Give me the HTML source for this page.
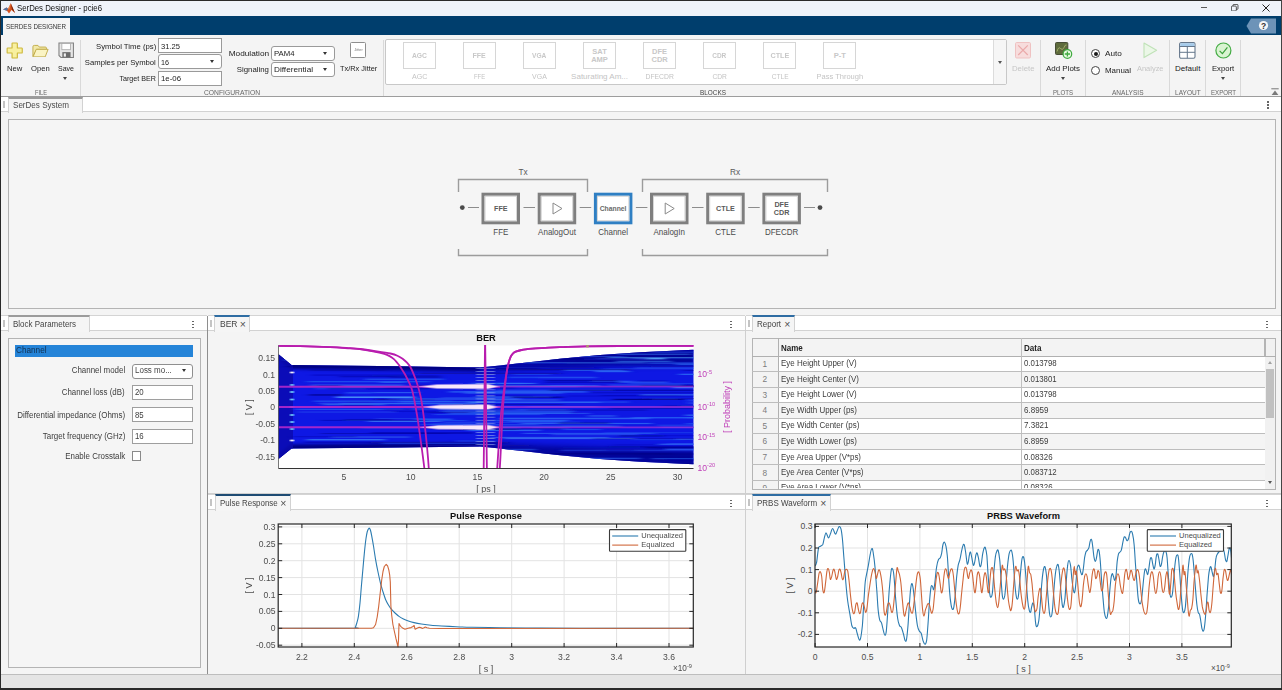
<!DOCTYPE html>
<html><head><meta charset="utf-8"><title>SerDes Designer - pcie6</title>
<style>
*{box-sizing:border-box;margin:0;padding:0}
html,body{width:1282px;height:690px;overflow:hidden;background:#f4f4f4;font-family:"Liberation Sans",sans-serif;font-size:8px;color:#222}
.abs{position:absolute}
#win{position:absolute;left:0;top:0;width:1282px;height:690px;background:#f4f4f4;overflow:hidden}
.t{position:absolute;white-space:nowrap;line-height:1}
.inp{position:absolute;background:#fff;border:1px solid #9a9a9a}
.dd{border-radius:3px}
.sep{position:absolute;width:1px;background:#d9d9d9}
.gb{position:absolute;width:33px;height:26.5px;border:1px solid #d6d6d6;background:#fff}
.dots{position:absolute;width:2px;height:2px;background:#555;box-shadow:0 3px 0 #555,0 6px 0 #555}
</style></head><body><div id="win">
<div class="abs" style="left:0;top:0;width:1282px;height:16px;background:#eff3fa"></div>
<svg class="abs" style="left:3px;top:2.5px" width="12" height="11" viewBox="0 0 24 22"><path d="M0 13 L7 9 L10 11.5 L15.5 0.5 L24 20 L17 14 L12 21 L8 15.5 Z" fill="#d6501c"/><path d="M0 13 L7 9 L10 11.5 L8 15.5 Z" fill="#4f74a8"/><path d="M15.5 0.5 L24 20 L18 13 Z" fill="#7e2408"/><path d="M10 11.5 L15.5 0.5 L14 9 L12 14 Z" fill="#f0a060" opacity="0.6"/></svg>
<div class="t" style="left:16.5px;top:4.1px;font-size:9px;color:#111;transform:scaleX(0.867);transform-origin:0 0;">SerDes Designer - pcie6</div>
<div class="abs" style="left:1200.7px;top:6.8px;width:6.8px;height:1.4px;background:#5a5a5a"></div>
<svg class="abs" style="left:1231.3px;top:4px" width="7.4" height="7.4" viewBox="0 0 9 9"><rect x="0.5" y="2.5" width="6" height="6" rx="1.2" fill="none" stroke="#333" stroke-width="1"/><path d="M2.5 2.5 V1.4 Q2.5 0.5 3.4 0.5 H7.4 Q8.5 0.5 8.5 1.6 V5.6 Q8.5 6.5 7.6 6.5 H6.5" fill="none" stroke="#333" stroke-width="1"/></svg>
<svg class="abs" style="left:1262px;top:4px" width="8" height="8" viewBox="0 0 8 8"><path d="M0.5 0.5 L7.5 7.5 M7.5 0.5 L0.5 7.5" stroke="#222" stroke-width="1" fill="none"/></svg>
<div class="abs" style="left:0;top:16px;width:1282px;height:19px;background:#003e6d"></div>
<div class="abs" style="left:3px;top:18px;width:67px;height:18px;background:#f4f4f4"></div>
<div class="t" style="left:6.3px;top:22.8px;font-size:7.3px;color:#333;transform:scaleX(0.855);transform-origin:0 0;">SERDES DESIGNER</div>
<svg class="abs" style="left:1246px;top:18px" width="31" height="16" viewBox="0 0 31 16"><path d="M0.5 8 L5 0.5 H30 V15.5 H5 Z" fill="#6d93b8"/><circle cx="17.5" cy="7.5" r="4.6" fill="#f4f6f8"/><text x="17.5" y="10.6" font-family="Liberation Sans, sans-serif" font-size="8.5" font-weight="bold" fill="#333" text-anchor="middle">?</text></svg>
<div class="abs" style="left:0;top:35px;width:1282px;height:62px;background:#f4f4f4;border-bottom:1px solid #9d9d9d"></div>
<svg class="abs" style="left:5.7px;top:41.7px" width="17.4" height="17" viewBox="0 0 18 18"><path d="M6.9 1 H11.1 Q11.8 1 11.8 1.7 V6.3 H16.3 Q17 6.3 17 7 V11 Q17 11.7 16.3 11.7 H11.8 V16.3 Q11.8 17 11.1 17 H6.9 Q6.2 17 6.2 16.3 V11.7 H1.7 Q1 11.7 1 11 V7 Q1 6.3 1.7 6.3 H6.2 V1.7 Q6.2 1 6.9 1 Z" fill="#f8f0a0" stroke="#cdb83a" stroke-width="1.2" stroke-linejoin="round"/></svg>
<svg class="abs" style="left:31.8px;top:43.6px" width="17.4" height="13.8" viewBox="0 0 19 15"><path d="M1 3 Q1 1.5 2.5 1.5 H6.5 L8 3.3 H14.5 Q15.8 3.3 15.8 4.5 V5.8 H5 L1 13.5 Z" fill="#f2e9a8" stroke="#bfaa45" stroke-width="1"/><path d="M1.2 14 L4.6 5.8 H17.6 L14.4 14 Z" fill="#faf4c4" stroke="#bfaa45" stroke-width="1" stroke-linejoin="round"/></svg>
<svg class="abs" style="left:57.8px;top:41.8px" width="16.4" height="16.4" viewBox="0 0 17 17"><path d="M1 1 H16 V16 H3 L1 14 Z" fill="#e6e6e6" stroke="#808080" stroke-width="1.1"/><rect x="4" y="1.5" width="9" height="6.5" fill="#fdfdfd" stroke="#a4a4a4" stroke-width="0.8"/><rect x="4.5" y="10.5" width="8.5" height="5.5" fill="#6c6c6c"/><rect x="6" y="11.8" width="2.2" height="3.4" fill="#f0f0f0"/></svg>
<div class="t" style="left:6.9px;top:64.5px;font-size:8px;color:#222;transform:scaleX(0.956);transform-origin:0 0;">New</div>
<div class="t" style="left:31.0px;top:64.5px;font-size:8px;color:#222;transform:scaleX(0.956);transform-origin:0 0;">Open</div>
<div class="t" style="left:58.0px;top:64.5px;font-size:8px;color:#222;transform:scaleX(0.877);transform-origin:0 0;">Save</div>
<div class="abs" style="left:63.3px;top:77.2px;border:2.8px solid transparent;border-top:3.3px solid #444;border-bottom:0"></div>
<div class="t" style="left:34.7px;top:89.1px;font-size:7px;color:#666;transform:scaleX(0.819);transform-origin:0 0;">FILE</div>
<div class="sep" style="left:80px;top:40px;height:56px"></div>
<div class="t" style="left:94.0px;top:42.6px;font-size:8px;color:#222;transform:scaleX(0.967);transform-origin:100% 0;">Symbol Time (ps)</div>
<div class="t" style="left:82.4px;top:58.6px;font-size:8px;color:#222;transform:scaleX(0.962);transform-origin:100% 0;">Samples per Symbol</div>
<div class="t" style="left:115.3px;top:74.6px;font-size:8px;color:#222;transform:scaleX(0.892);transform-origin:100% 0;">Target BER</div>
<div class="inp" style="left:158px;top:38px;width:63.5px;height:15px"></div>
<div class="inp dd" style="left:158px;top:54px;width:63.5px;height:15px"></div>
<div class="inp" style="left:158px;top:70.5px;width:63.5px;height:15px"></div>
<div class="t" style="left:161.0px;top:42.6px;font-size:8px;color:#222;transform:scaleX(0.949);transform-origin:0 0;">31.25</div>
<div class="t" style="left:161.0px;top:58.6px;font-size:8px;color:#222;transform:scaleX(0.899);transform-origin:0 0;">16</div>
<div class="t" style="left:161.0px;top:74.6px;font-size:8px;color:#222;transform:scaleX(0.978);transform-origin:0 0;">1e-06</div>
<div class="abs" style="left:209.7px;top:60.1px;border:2.8px solid transparent;border-top:3.3px solid #333;border-bottom:0"></div>
<div class="t" style="left:229.9px;top:50.4px;font-size:8px;color:#222;transform:scaleX(1.035);transform-origin:100% 0;">Modulation</div>
<div class="t" style="left:236.1px;top:66.3px;font-size:8px;color:#222;transform:scaleX(0.978);transform-origin:100% 0;">Signaling</div>
<div class="inp dd" style="left:270.5px;top:46px;width:64.5px;height:15px"></div>
<div class="inp dd" style="left:270.5px;top:62.3px;width:64.5px;height:15px"></div>
<div class="t" style="left:274.0px;top:50.4px;font-size:8px;color:#222;transform:scaleX(0.967);transform-origin:0 0;">PAM4</div>
<div class="t" style="left:274.0px;top:66.3px;font-size:8px;color:#222;transform:scaleX(1.024);transform-origin:0 0;">Differential</div>
<div class="abs" style="left:323.2px;top:52.2px;border:2.8px solid transparent;border-top:3.3px solid #333;border-bottom:0"></div>
<div class="abs" style="left:323.2px;top:68.3px;border:2.8px solid transparent;border-top:3.3px solid #333;border-bottom:0"></div>
<div class="abs" style="left:350.3px;top:42.3px;width:15.7px;height:15.7px;border:1px solid #8e8e8e;border-radius:1.5px;background:#fff"></div>
<div class="t" style="left:353.6px;top:48.2px;font-size:4.2px;color:#7a7a7a;transform:scaleX(0.945);transform-origin:50% 0;">Jitter</div>
<div class="t" style="left:340.0px;top:64.5px;font-size:8px;color:#222;transform:scaleX(0.922);transform-origin:0 0;">Tx/Rx Jitter</div>
<div class="t" style="left:203.8px;top:89.1px;font-size:7px;color:#666;transform:scaleX(0.962);transform-origin:0 0;">CONFIGURATION</div>
<div class="sep" style="left:382.5px;top:40px;height:56px"></div>
<div class="abs" style="left:385px;top:39px;width:621.5px;height:46px;border:1px solid #c8c8c8;border-radius:2px;background:#fff"></div>
<div class="abs" style="left:993px;top:40px;width:12.5px;height:44px;background:#f6f6f6;border-left:1px solid #dcdcdc"></div>
<div class="gb" style="left:402.9px;top:42px"></div>
<div class="t" style="left:410.9px;top:51.7px;font-size:7.6px;color:#c8c8c8;font-weight:bold;transform:scaleX(0.888);transform-origin:50% 0;">AGC</div>
<div class="t" style="left:410.6px;top:72.6px;font-size:8px;color:#c4c4c4;transform:scaleX(0.888);transform-origin:50% 0;">AGC</div>
<div class="gb" style="left:463.0px;top:42px"></div>
<div class="t" style="left:472.2px;top:51.7px;font-size:7.6px;color:#c8c8c8;font-weight:bold;transform:scaleX(0.927);transform-origin:50% 0;">FFE</div>
<div class="t" style="left:471.8px;top:72.6px;font-size:8px;color:#c4c4c4;transform:scaleX(0.741);transform-origin:50% 0;">FFE</div>
<div class="gb" style="left:523.0px;top:42px"></div>
<div class="t" style="left:531.2px;top:51.7px;font-size:7.6px;color:#c8c8c8;font-weight:bold;transform:scaleX(0.868);transform-origin:50% 0;">VGA</div>
<div class="t" style="left:531.0px;top:72.6px;font-size:8px;color:#c4c4c4;transform:scaleX(0.870);transform-origin:50% 0;">VGA</div>
<div class="gb" style="left:583.1px;top:42px"></div>
<div class="t" style="left:592.3px;top:48.0px;font-size:7.5px;color:#c8c8c8;font-weight:bold;">SAT</div>
<div class="t" style="left:591.2px;top:55.7px;font-size:7.5px;color:#c8c8c8;font-weight:bold;">AMP</div>
<div class="t" style="left:571.1px;top:72.6px;font-size:8px;color:#c4c4c4;">Saturating Am...</div>
<div class="gb" style="left:643.2px;top:42px"></div>
<div class="t" style="left:652.1px;top:48.0px;font-size:7.5px;color:#c8c8c8;font-weight:bold;">DFE</div>
<div class="t" style="left:651.5px;top:55.7px;font-size:7.5px;color:#c8c8c8;font-weight:bold;">CDR</div>
<div class="t" style="left:642.9px;top:72.6px;font-size:8px;color:#c4c4c4;transform:scaleX(0.852);transform-origin:50% 0;">DFECDR</div>
<div class="gb" style="left:703.2px;top:42px"></div>
<div class="t" style="left:711.4px;top:51.7px;font-size:7.6px;color:#c8c8c8;font-weight:bold;transform:scaleX(0.856);transform-origin:50% 0;">CDR</div>
<div class="t" style="left:711.0px;top:72.6px;font-size:8px;color:#c4c4c4;transform:scaleX(0.837);transform-origin:50% 0;">CDR</div>
<div class="gb" style="left:763.3px;top:42px"></div>
<div class="t" style="left:769.8px;top:51.7px;font-size:7.6px;color:#c8c8c8;font-weight:bold;transform:scaleX(0.953);transform-origin:50% 0;">CTLE</div>
<div class="t" style="left:769.5px;top:72.6px;font-size:8px;color:#c4c4c4;transform:scaleX(0.822);transform-origin:50% 0;">CTLE</div>
<div class="gb" style="left:823.4px;top:42px"></div>
<div class="t" style="left:833.7px;top:51.7px;font-size:7.6px;color:#c8c8c8;font-weight:bold;">P-T</div>
<div class="t" style="left:815.0px;top:72.6px;font-size:8px;color:#c4c4c4;transform:scaleX(0.940);transform-origin:50% 0;">Pass Through</div>
<div class="abs" style="left:997.8px;top:61.1px;border:2.8px solid transparent;border-top:3.3px solid #555;border-bottom:0"></div>
<div class="t" style="left:699.5px;top:89.1px;font-size:7px;color:#444;transform:scaleX(0.915);transform-origin:0 0;">BLOCKS</div>
<svg class="abs" style="left:1014.5px;top:42px" width="16" height="16.5" viewBox="0 0 16 16.5"><rect x="0.5" y="0.5" width="15" height="15.5" rx="1.2" fill="#f7dcdc" stroke="#efc2c2"/><path d="M3.2 3.4 L12.8 13 M12.8 3.4 L3.2 13" stroke="#eaa9a9" stroke-width="1.2"/></svg>
<div class="t" style="left:1011.8px;top:64.5px;font-size:8px;color:#c6c6c6;transform:scaleX(0.973);transform-origin:0 0;">Delete</div>
<div class="sep" style="left:1039.5px;top:40px;height:56px"></div>
<svg class="abs" style="left:1054.5px;top:42px" width="18" height="18" viewBox="0 0 18 18"><rect x="0.5" y="0.5" width="12.3" height="12" rx="1" fill="#5e6b3c" stroke="#474d36"/><path d="M2 9.5 Q3.5 4 5.5 6.5 T9 5.5 T11.5 3" stroke="#a9b76e" stroke-width="0.9" fill="none"/><circle cx="12.4" cy="12" r="4.3" fill="#e6f8e0" stroke="#3faa3f" stroke-width="1.2"/><path d="M12.4 9.4 V14.6 M9.8 12 H15" stroke="#3faa3f" stroke-width="1.3"/></svg>
<div class="t" style="left:1046.0px;top:64.5px;font-size:8px;color:#222;transform:scaleX(0.993);transform-origin:0 0;">Add Plots</div>
<div class="abs" style="left:1060.7px;top:77.2px;border:2.8px solid transparent;border-top:3.3px solid #444;border-bottom:0"></div>
<div class="t" style="left:1053.0px;top:89.1px;font-size:7px;color:#666;transform:scaleX(0.871);transform-origin:0 0;">PLOTS</div>
<div class="sep" style="left:1085px;top:40px;height:56px"></div>
<div class="abs" style="left:1091px;top:49.1px;width:9.3px;height:9.3px;border:1px solid #444;border-radius:50%;background:#fff"></div><div class="abs" style="left:1093.6px;top:51.7px;width:4.1px;height:4.1px;border-radius:50%;background:#1a1a1a"></div>
<div class="abs" style="left:1091px;top:65.6px;width:9.3px;height:9.3px;border:1px solid #444;border-radius:50%;background:#fff"></div>
<div class="t" style="left:1105.4px;top:50.4px;font-size:8px;color:#222;transform:scaleX(1.021);transform-origin:0 0;">Auto</div>
<div class="t" style="left:1105.4px;top:66.6px;font-size:8px;color:#222;transform:scaleX(0.991);transform-origin:0 0;">Manual</div>
<svg class="abs" style="left:1142.5px;top:42px" width="15" height="17" viewBox="0 0 15 17"><path d="M1 1 L13.6 8.3 L1 15.6 Z" fill="#ebf7e7" stroke="#bfe2b7" stroke-width="1.1" stroke-linejoin="round"/></svg>
<div class="t" style="left:1136.7px;top:64.5px;font-size:8px;color:#c6c6c6;transform:scaleX(0.931);transform-origin:0 0;">Analyze</div>
<div class="t" style="left:1112.0px;top:89.1px;font-size:7px;color:#666;transform:scaleX(0.934);transform-origin:0 0;">ANALYSIS</div>
<div class="sep" style="left:1169px;top:40px;height:56px"></div>
<svg class="abs" style="left:1179px;top:42px" width="17" height="17" viewBox="0 0 17 17"><rect x="0.6" y="0.6" width="15.4" height="15.6" rx="1.5" fill="#fff" stroke="#66788c" stroke-width="1.1"/><rect x="1.2" y="1.2" width="14.2" height="2.8" fill="#a6cbea"/><path d="M0.6 4.5 H16 M0.6 10.3 H16 M8.3 4.5 V16.2" stroke="#66788c" stroke-width="1"/></svg>
<div class="t" style="left:1175.0px;top:64.5px;font-size:8px;color:#222;">Default</div>
<div class="t" style="left:1174.7px;top:89.1px;font-size:7px;color:#666;transform:scaleX(0.935);transform-origin:0 0;">LAYOUT</div>
<div class="sep" style="left:1205px;top:40px;height:56px"></div>
<svg class="abs" style="left:1215px;top:41.5px" width="17" height="17" viewBox="0 0 17 17"><circle cx="8.4" cy="8.5" r="7.5" fill="#d9f4d1" stroke="#43ab43" stroke-width="1.2"/><path d="M4.6 8.9 L7.4 11.6 L12.4 5.4" fill="none" stroke="#3a9f3a" stroke-width="1.2"/></svg>
<div class="t" style="left:1212.1px;top:64.5px;font-size:8px;color:#222;transform:scaleX(0.960);transform-origin:0 0;">Export</div>
<div class="abs" style="left:1220.9px;top:77.2px;border:2.8px solid transparent;border-top:3.3px solid #444;border-bottom:0"></div>
<div class="t" style="left:1210.9px;top:89.1px;font-size:7px;color:#666;transform:scaleX(0.872);transform-origin:0 0;">EXPORT</div>
<div class="sep" style="left:1240px;top:40px;height:56px"></div>
<svg class="abs" style="left:1271px;top:87.5px" width="8" height="8" viewBox="0 0 8 8"><path d="M0.3 0.8 H7.7" stroke="#777" stroke-width="1"/><path d="M4 2.6 L7.4 7 H0.6 Z" fill="#7a7a7a"/></svg>
<div class="abs" style="left:1px;top:97px;width:1280px;height:15px;background:#fff;border-bottom:1px solid #d2d2d2"></div>
<div class="abs" style="left:3px;top:101px;width:2px;height:7px;background:#c4c4c4"></div>
<div class="abs" style="left:8px;top:96.5px;width:74.5px;height:16px;background:#f5f5f5;border-left:1px solid #d2d2d2;border-right:1px solid #d2d2d2;border-top:2.4px solid #9b9b9b"></div>
<div class="t" style="left:13.3px;top:101.4px;font-size:9px;color:#4a4a4a;transform:scaleX(0.896);transform-origin:0 0;">SerDes System</div>
<div class="dots" style="left:1267.3px;top:101.3px;width:1.5px;height:1.5px;background:#666;box-shadow:0 3px 0 #666,0 6px 0 #666"></div>
<div class="abs" style="left:8px;top:119px;width:1268px;height:190px;border:1px solid #b4b4b4;background:#f5f5f5"></div>
<svg class="abs" style="left:440px;top:160px" width="420" height="110" viewBox="440 160 420 110" font-family="Liberation Sans, sans-serif">
<path d="M458.5 192 V179.5 H587.5 V192 M458.5 249 V255.5 H587.5 V249" fill="none" stroke="#9c9c9c" stroke-width="1.4"/>
<path d="M642.5 192 V179.5 H827.5 V192 M642.5 249 V255.5 H827.5 V249" fill="none" stroke="#9c9c9c" stroke-width="1.4"/>
<text x="523" y="175" font-size="8.3" fill="#5a5a5a" text-anchor="middle">Tx</text>
<text x="735" y="175" font-size="8.3" fill="#5a5a5a" text-anchor="middle">Rx</text>
<circle cx="462.3" cy="207.6" r="2.4" fill="#4a4a4a"/><circle cx="820" cy="207.6" r="2.4" fill="#4a4a4a"/>
<path d="M468 207.5 H479 M523.5 207.5 H535.0 M579.7 207.5 H591.2 M635.9 207.5 H647.4 M692.0 207.5 H703.5 M748.2 207.5 H759.7 M804 207.5 H815" stroke="#8c8c8c" stroke-width="1.1" fill="none"/>
<rect x="483.0" y="194.2" width="35.5" height="28.6" fill="#fff" stroke="#7f7f7f" stroke-width="3"/>
<rect x="485.1" y="196.3" width="31.3" height="24.4" fill="none" stroke="#cfcfcf" stroke-width="0.8"/>
<text x="500.8" y="211.3" font-size="7.2" font-weight="bold" fill="#5a5a5a" text-anchor="middle">FFE</text>
<text transform="translate(500.8 235.4) scale(0.93 1)" font-size="8.6" fill="#4a4a4a" text-anchor="middle">FFE</text>
<rect x="539.2" y="194.2" width="35.5" height="28.6" fill="#fff" stroke="#7f7f7f" stroke-width="3"/>
<rect x="541.3" y="196.3" width="31.3" height="24.4" fill="none" stroke="#cfcfcf" stroke-width="0.8"/>
<path d="M553.0 203 L562.0 208.5 L553.0 214 Z" fill="#fff" stroke="#8a8a8a" stroke-width="1" stroke-linejoin="round"/>
<text transform="translate(557.0 235.4) scale(0.93 1)" font-size="8.6" fill="#4a4a4a" text-anchor="middle">AnalogOut</text>
<rect x="595.4" y="194.2" width="35.5" height="28.6" fill="#fff" stroke="#2f7fc3" stroke-width="3"/>
<rect x="597.5" y="196.3" width="31.3" height="24.4" fill="none" stroke="#cfcfcf" stroke-width="0.8"/>
<text x="613.1" y="211.3" font-size="6.8" font-weight="bold" fill="#6a6a6a" text-anchor="middle">Channel</text>
<text transform="translate(613.1 235.4) scale(0.93 1)" font-size="8.6" fill="#4a4a4a" text-anchor="middle">Channel</text>
<rect x="651.5" y="194.2" width="35.5" height="28.6" fill="#fff" stroke="#7f7f7f" stroke-width="3"/>
<rect x="653.6" y="196.3" width="31.3" height="24.4" fill="none" stroke="#cfcfcf" stroke-width="0.8"/>
<path d="M665.2 203 L674.2 208.5 L665.2 214 Z" fill="#fff" stroke="#8a8a8a" stroke-width="1" stroke-linejoin="round"/>
<text transform="translate(669.2 235.4) scale(0.93 1)" font-size="8.6" fill="#4a4a4a" text-anchor="middle">AnalogIn</text>
<rect x="707.7" y="194.2" width="35.5" height="28.6" fill="#fff" stroke="#7f7f7f" stroke-width="3"/>
<rect x="709.8" y="196.3" width="31.3" height="24.4" fill="none" stroke="#cfcfcf" stroke-width="0.8"/>
<text x="725.5" y="211.3" font-size="7.2" font-weight="bold" fill="#5a5a5a" text-anchor="middle">CTLE</text>
<text transform="translate(725.5 235.4) scale(0.93 1)" font-size="8.6" fill="#4a4a4a" text-anchor="middle">CTLE</text>
<rect x="763.9" y="194.2" width="35.5" height="28.6" fill="#fff" stroke="#7f7f7f" stroke-width="3"/>
<rect x="766.0" y="196.3" width="31.3" height="24.4" fill="none" stroke="#cfcfcf" stroke-width="0.8"/>
<text x="781.6" y="206.9" font-size="7.2" font-weight="bold" fill="#5a5a5a" text-anchor="middle">DFE</text><text x="781.6" y="214.8" font-size="7.2" font-weight="bold" fill="#5a5a5a" text-anchor="middle">CDR</text>
<text transform="translate(781.6 235.4) scale(0.93 1)" font-size="8.6" fill="#4a4a4a" text-anchor="middle">DFECDR</text>
</svg>
<div class="abs" style="left:207px;top:316px;width:1px;height:358px;background:#8e8e8e"></div>
<div class="abs" style="left:1px;top:315px;width:206px;height:16px;background:#fff;border-bottom:1px solid #d2d2d2;border-top:1px solid #d4d4d4"></div>
<div class="abs" style="left:3px;top:320px;width:2px;height:7px;background:#c4c4c4"></div>
<div class="abs" style="left:7.5px;top:315px;width:82.5px;height:16.5px;background:#f5f5f5;border-left:1px solid #d2d2d2;border-right:1px solid #d2d2d2;border-top:2.4px solid #9b9b9b"></div>
<div class="t" style="left:13.0px;top:320.0px;font-size:9px;color:#444;transform:scaleX(0.887);transform-origin:0 0;">Block Parameters</div>
<div class="dots" style="left:192px;top:320.5px;width:1.5px;height:1.5px;background:#666;box-shadow:0 3px 0 #666,0 6px 0 #666"></div>
<div class="abs" style="left:7.5px;top:338px;width:193.2px;height:330px;border:1px solid #b4b4b4;background:#f5f5f5"></div>
<div class="abs" style="left:15px;top:345px;width:178px;height:11.5px;background:#2584d8"></div>
<div class="t" style="left:15.5px;top:345.9px;font-size:8.6px;color:#12304f;transform:scaleX(0.955);transform-origin:0 0;">Channel</div>
<div class="t" style="left:67.6px;top:366.1px;font-size:8.5px;color:#3c3c3c;transform:scaleX(0.936);transform-origin:100% 0;">Channel model</div>
<div class="t" style="left:57.2px;top:388.3px;font-size:8.5px;color:#3c3c3c;transform:scaleX(0.930);transform-origin:100% 0;">Channel loss (dB)</div>
<div class="t" style="left:9.7px;top:410.6px;font-size:8.5px;color:#3c3c3c;transform:scaleX(0.938);transform-origin:100% 0;">Differential impedance (Ohms)</div>
<div class="t" style="left:36.5px;top:432.0px;font-size:8.5px;color:#3c3c3c;transform:scaleX(0.934);transform-origin:100% 0;">Target frequency (GHz)</div>
<div class="t" style="left:60.6px;top:451.8px;font-size:8.5px;color:#3c3c3c;transform:scaleX(0.934);transform-origin:100% 0;">Enable Crosstalk</div>
<div class="inp dd" style="left:131.7px;top:363.5px;width:61px;height:15px;border-color:#8f8f8f"></div>
<div class="t" style="left:135.2px;top:366.1px;font-size:8.5px;color:#444;transform:scaleX(0.939);transform-origin:0 0;">Loss mo...</div>
<div class="abs" style="left:182.3px;top:369.2px;border:2.8px solid transparent;border-top:3.3px solid #333;border-bottom:0"></div>
<div class="inp" style="left:131.7px;top:385.2px;width:61.5px;height:15px;border-color:#9e9e9e"></div>
<div class="t" style="left:135.2px;top:388.3px;font-size:8.5px;color:#3c3c3c;transform:scaleX(0.920);transform-origin:0 0;">20</div>
<div class="inp" style="left:131.7px;top:407px;width:61.5px;height:15px;border-color:#9e9e9e"></div>
<div class="t" style="left:135.2px;top:410.6px;font-size:8.5px;color:#3c3c3c;transform:scaleX(0.920);transform-origin:0 0;">85</div>
<div class="inp" style="left:131.7px;top:429px;width:61.5px;height:15px;border-color:#9e9e9e"></div>
<div class="t" style="left:135.2px;top:432.2px;font-size:8.5px;color:#3c3c3c;transform:scaleX(0.920);transform-origin:0 0;">16</div>
<div class="abs" style="left:131.8px;top:451.2px;width:9.6px;height:9.8px;border:1px solid #8a8a8a;background:#fff"></div>
<div class="abs" style="left:745px;top:316px;width:1px;height:358px;background:#cfcfcf"></div>
<div class="abs" style="left:746px;top:315px;width:535px;height:16px;background:#fff;border-bottom:1px solid #d2d2d2;border-top:1px solid #d4d4d4"></div>
<div class="abs" style="left:748px;top:320px;width:2px;height:7px;background:#c4c4c4"></div>
<div class="abs" style="left:751.5px;top:315px;width:43px;height:16.5px;background:#f5f5f5;border-left:1px solid #d2d2d2;border-right:1px solid #d2d2d2;border-top:2.4px solid #2f6da3"></div>
<div class="t" style="left:757.0px;top:320.0px;font-size:9px;color:#444;transform:scaleX(0.889);transform-origin:0 0;">Report</div>
<div class="t" style="left:784.2px;top:319.1px;font-size:10.5px;color:#505050;">&#215;</div>
<div class="dots" style="left:1266px;top:320.5px;width:1.5px;height:1.5px;background:#666;box-shadow:0 3px 0 #666,0 6px 0 #666"></div>
<div class="abs" style="left:752px;top:338px;width:523.5px;height:151.5px;background:#fff;border:1px solid #b4b4b4;overflow:hidden"></div>
<div class="abs" style="left:753px;top:339px;width:521.5px;height:17px;background:#f3f3f3"></div>
<div class="abs" style="left:753px;top:371.7px;width:512px;height:15.5px;background:#f4f4f4"></div>
<div class="abs" style="left:753px;top:402.8px;width:512px;height:15.5px;background:#f4f4f4"></div>
<div class="abs" style="left:753px;top:433.8px;width:512px;height:15.5px;background:#f4f4f4"></div>
<div class="abs" style="left:753px;top:464.9px;width:512px;height:15.5px;background:#f4f4f4"></div>
<div class="abs" style="left:753px;top:339px;width:26px;height:149.5px;background:#f3f3f3"></div>
<div class="abs" style="left:1264.5px;top:339px;width:10px;height:149.5px;background:#f1f1f1"></div>
<div class="abs" style="left:1264px;top:338px;width:1.5px;height:18px;background:#b4b4b4"></div>
<div class="abs" style="left:752px;top:355.7px;width:523.5px;height:1px;background:#b0b0b0"></div>
<div class="abs" style="left:778.2px;top:338px;width:1px;height:151.5px;background:#b0b0b0"></div>
<div class="abs" style="left:1021.2px;top:338px;width:1px;height:151.5px;background:#c0c0c0"></div>
<div class="t" style="left:781.4px;top:344.2px;font-size:8.3px;color:#222;font-weight:bold;transform:scaleX(0.964);transform-origin:0 0;">Name</div>
<div class="t" style="left:1024.4px;top:344.2px;font-size:8.3px;color:#222;font-weight:bold;transform:scaleX(0.973);transform-origin:0 0;">Data</div>
<div class="abs" style="left:752px;top:371.2px;width:513px;height:1px;background:#bdbdbd"></div>
<div class="t" style="left:762.4px;top:359.8px;font-size:8.3px;color:#7c7c7c;">1</div>
<div class="t" style="left:781.4px;top:359.3px;font-size:8.5px;color:#3c3c3c;transform:scaleX(0.938);transform-origin:0 0;">Eye Height Upper (V)</div>
<div class="t" style="left:1024.4px;top:359.3px;font-size:8.5px;color:#3c3c3c;transform:scaleX(0.922);transform-origin:0 0;">0.013798</div>
<div class="abs" style="left:752px;top:386.8px;width:513px;height:1px;background:#bdbdbd"></div>
<div class="t" style="left:762.4px;top:375.3px;font-size:8.3px;color:#7c7c7c;">2</div>
<div class="t" style="left:781.4px;top:374.8px;font-size:8.5px;color:#3c3c3c;transform:scaleX(0.938);transform-origin:0 0;">Eye Height Center (V)</div>
<div class="t" style="left:1024.4px;top:374.8px;font-size:8.5px;color:#3c3c3c;transform:scaleX(0.922);transform-origin:0 0;">0.013801</div>
<div class="abs" style="left:752px;top:402.3px;width:513px;height:1px;background:#bdbdbd"></div>
<div class="t" style="left:762.4px;top:390.8px;font-size:8.3px;color:#7c7c7c;">3</div>
<div class="t" style="left:781.4px;top:390.4px;font-size:8.5px;color:#3c3c3c;transform:scaleX(0.938);transform-origin:0 0;">Eye Height Lower (V)</div>
<div class="t" style="left:1024.4px;top:390.4px;font-size:8.5px;color:#3c3c3c;transform:scaleX(0.922);transform-origin:0 0;">0.013798</div>
<div class="abs" style="left:752px;top:417.8px;width:513px;height:1px;background:#bdbdbd"></div>
<div class="t" style="left:762.4px;top:406.4px;font-size:8.3px;color:#7c7c7c;">4</div>
<div class="t" style="left:781.4px;top:405.9px;font-size:8.5px;color:#3c3c3c;transform:scaleX(0.935);transform-origin:0 0;">Eye Width Upper (ps)</div>
<div class="t" style="left:1024.4px;top:405.9px;font-size:8.5px;color:#3c3c3c;transform:scaleX(0.942);transform-origin:0 0;">6.8959</div>
<div class="abs" style="left:752px;top:433.3px;width:513px;height:1px;background:#bdbdbd"></div>
<div class="t" style="left:762.4px;top:421.9px;font-size:8.3px;color:#7c7c7c;">5</div>
<div class="t" style="left:781.4px;top:421.4px;font-size:8.5px;color:#3c3c3c;transform:scaleX(0.937);transform-origin:0 0;">Eye Width Center (ps)</div>
<div class="t" style="left:1024.4px;top:421.4px;font-size:8.5px;color:#3c3c3c;transform:scaleX(0.942);transform-origin:0 0;">7.3821</div>
<div class="abs" style="left:752px;top:448.9px;width:513px;height:1px;background:#bdbdbd"></div>
<div class="t" style="left:762.4px;top:437.4px;font-size:8.3px;color:#7c7c7c;">6</div>
<div class="t" style="left:781.4px;top:437.0px;font-size:8.5px;color:#3c3c3c;transform:scaleX(0.935);transform-origin:0 0;">Eye Width Lower (ps)</div>
<div class="t" style="left:1024.4px;top:437.0px;font-size:8.5px;color:#3c3c3c;transform:scaleX(0.942);transform-origin:0 0;">6.8959</div>
<div class="abs" style="left:752px;top:464.4px;width:513px;height:1px;background:#bdbdbd"></div>
<div class="t" style="left:762.4px;top:453.0px;font-size:8.3px;color:#7c7c7c;">7</div>
<div class="t" style="left:781.4px;top:452.5px;font-size:8.5px;color:#3c3c3c;transform:scaleX(0.930);transform-origin:0 0;">Eye Area Upper (V*ps)</div>
<div class="t" style="left:1024.4px;top:452.5px;font-size:8.5px;color:#3c3c3c;transform:scaleX(0.928);transform-origin:0 0;">0.08326</div>
<div class="abs" style="left:752px;top:479.9px;width:513px;height:1px;background:#bdbdbd"></div>
<div class="t" style="left:762.4px;top:468.5px;font-size:8.3px;color:#7c7c7c;">8</div>
<div class="t" style="left:781.4px;top:468.0px;font-size:8.5px;color:#3c3c3c;transform:scaleX(0.934);transform-origin:0 0;">Eye Area Center (V*ps)</div>
<div class="t" style="left:1024.4px;top:468.0px;font-size:8.5px;color:#3c3c3c;transform:scaleX(0.922);transform-origin:0 0;">0.083712</div>
<div class="abs" style="left:752px;top:481.4px;width:513px;height:7.1px;overflow:hidden"><div class="t" style="left:10.4px;top:2.6px;font-size:8.3px;color:#7c7c7c;">9</div>
<div class="t" style="left:29.4px;top:2.1px;font-size:8.5px;color:#3c3c3c;transform:scaleX(0.930);transform-origin:0 0;">Eye Area Lower (V*ps)</div>
<div class="t" style="left:272.4px;top:2.1px;font-size:8.5px;color:#3c3c3c;transform:scaleX(0.928);transform-origin:0 0;">0.08326</div>
</div>
<div class="abs" style="left:1266.3px;top:368.6px;width:7.6px;height:49.6px;background:#c1c1c1"></div>
<div class="abs" style="left:1267.6px;top:360.5px;border:2.5px solid transparent;border-bottom:3px solid #a2a2a2;border-top:0"></div>
<div class="abs" style="left:1267.6px;top:480.5px;border:2.5px solid transparent;border-top:3px solid #555;border-bottom:0"></div>
<div class="abs" style="left:208px;top:315px;width:537px;height:16px;background:#fff;border-bottom:1px solid #d2d2d2;border-top:1px solid #d4d4d4"></div>
<div class="abs" style="left:210px;top:320px;width:2px;height:7px;background:#c4c4c4"></div>
<div class="abs" style="left:214px;top:315px;width:36px;height:16.5px;background:#f5f5f5;border-left:1px solid #d2d2d2;border-right:1px solid #d2d2d2;border-top:2.4px solid #2f6da3"></div>
<div class="t" style="left:219.5px;top:320.0px;font-size:9px;color:#444;transform:scaleX(0.946);transform-origin:0 0;">BER</div>
<div class="t" style="left:239.7px;top:319.1px;font-size:10.5px;color:#505050;">&#215;</div>
<div class="dots" style="left:730px;top:320.5px;width:1.5px;height:1.5px;background:#666;box-shadow:0 3px 0 #666,0 6px 0 #666"></div>
<svg class="abs" style="left:208px;top:332px" width="537" height="162" viewBox="208 332 537 162" font-family="Liberation Sans, sans-serif">
<rect x="278.5" y="345.5" width="415.0" height="123.0" fill="#fff"/>
<defs>
<clipPath id="env"><path d="M278.5 354.3 L291.5 365 L400 366.2 L480 367.5 L500 365.5 L520 363.2 L560 358.7 L600 355 L640 352.3 L693.5 349.8 V464.2 L640 461.7 L600 459 L560 455.3 L520 450.8 L500 448.5 L480 446.5 L400 447.6 L291.5 448.6 L278.5 459 Z"/></clipPath>
<filter id="bl" x="-5%" y="-5%" width="110%" height="110%"><feGaussianBlur stdDeviation="3 0.5"/></filter>
<filter id="bl2" x="-5%" y="-50%" width="110%" height="200%"><feGaussianBlur stdDeviation="1.1 0.45"/></filter>
<filter id="bl3" x="-10%" y="-10%" width="120%" height="120%"><feGaussianBlur stdDeviation="1.5 3"/></filter>
<filter id="bl4" x="-10%" y="-10%" width="120%" height="120%"><feGaussianBlur stdDeviation="1 1.6"/></filter>
</defs>
<g clip-path="url(#env)">
<rect x="278" y="345" width="416" height="124" fill="#0e18e4"/>
<path d="M278.5 354.3 L291.5 365 L480 367.5 M480 446.5 L291.5 448.6 L278.5 459" fill="none" stroke="#05057c" stroke-width="8" filter="url(#bl4)" opacity="0.95"/>
<path d="M480 367.5 L500 365.5 L520 363.2 L560 358.7 L600 355 L640 352.3 L693.5 349.8 V339 L480 360 Z M480 446.5 L500 448.5 L520 450.8 L560 455.3 L600 459 L640 461.7 L693.5 464.2 V475 L480 454 Z" fill="#05057c" stroke="#05057c" stroke-width="1" filter="url(#bl3)"/>
<path d="M480 367.5 L520 363.2 L560 358.7 L600 355 L640 352.3 L693.5 349.8 L693.5 364 L600 366 L480 370 Z M480 446.5 L520 450.8 L560 455.3 L600 459 L640 461.7 L693.5 464.2 L693.5 450 L600 448 L480 443.8 Z" fill="#06068a" filter="url(#bl3)" opacity="0.9"/>
<path d="M278 350 L293 364 V450 L278 462 Z" fill="#0a0ab0" opacity="0.85"/>
<g filter="url(#bl)"><rect x="468" y="401.8" width="132" height="0.9" fill="#58b0fa" opacity="0.80"/><rect x="323" y="404.3" width="63" height="0.8" fill="#3c8cf6" opacity="0.80"/><rect x="676" y="438.7" width="107" height="1.2" fill="#58b0fa" opacity="0.48"/><rect x="299" y="353.7" width="135" height="1.2" fill="#0a0aa6" opacity="0.79"/><rect x="495" y="385.3" width="105" height="1.1" fill="#3c8cf6" opacity="0.73"/><rect x="688" y="399.8" width="130" height="1.3" fill="#2c5cf2" opacity="0.56"/><rect x="513" y="374.2" width="38" height="0.8" fill="#2a6af4" opacity="0.55"/><rect x="285" y="359.4" width="51" height="1.4" fill="#3070f4" opacity="0.63"/><rect x="514" y="466.0" width="50" height="1.2" fill="#0a0aa6" opacity="0.57"/><rect x="592" y="380.8" width="40" height="0.9" fill="#58b0fa" opacity="0.45"/><rect x="561" y="348.5" width="49" height="1.1" fill="#080892" opacity="0.89"/><rect x="332" y="436.6" width="78" height="0.9" fill="#58b0fa" opacity="0.53"/><rect x="689" y="481.6" width="27" height="0.8" fill="#0c10b8" opacity="0.90"/><rect x="686" y="423.3" width="52" height="0.9" fill="#2a6af4" opacity="0.79"/><rect x="315" y="388.2" width="51" height="1.2" fill="#2a6af4" opacity="0.41"/><rect x="673" y="385.8" width="85" height="1.2" fill="#080892" opacity="0.83"/><rect x="616" y="360.8" width="56" height="0.9" fill="#3c8cf6" opacity="0.77"/><rect x="642" y="475.7" width="100" height="1.0" fill="#070786" opacity="0.45"/><rect x="585" y="342.1" width="74" height="1.0" fill="#080892" opacity="0.85"/><rect x="681" y="405.6" width="41" height="1.1" fill="#3070f4" opacity="0.73"/><rect x="657" y="424.8" width="50" height="0.7" fill="#3c8cf6" opacity="0.53"/><rect x="399" y="401.0" width="91" height="1.5" fill="#3c8cf6" opacity="0.45"/><rect x="551" y="357.3" width="111" height="1.2" fill="#0c10b8" opacity="0.47"/><rect x="569" y="339.6" width="145" height="0.7" fill="#2456f0" opacity="0.72"/><rect x="340" y="405.0" width="34" height="1.1" fill="#0c10b8" opacity="0.58"/><rect x="606" y="337.5" width="139" height="1.0" fill="#080892" opacity="0.74"/><rect x="667" y="468.6" width="29" height="1.1" fill="#070786" opacity="0.41"/><rect x="532" y="427.3" width="35" height="1.2" fill="#2a6af4" opacity="0.90"/><rect x="663" y="468.5" width="112" height="1.1" fill="#070786" opacity="0.63"/><rect x="297" y="411.5" width="100" height="1.1" fill="#2c5cf2" opacity="0.52"/><rect x="552" y="433.8" width="86" height="1.4" fill="#2c5cf2" opacity="0.58"/><rect x="590" y="356.6" width="68" height="1.4" fill="#080892" opacity="0.65"/><rect x="365" y="378.6" width="79" height="1.3" fill="#2456f0" opacity="0.86"/><rect x="370" y="448.8" width="42" height="1.0" fill="#0c10b8" opacity="0.85"/><rect x="618" y="340.8" width="39" height="1.1" fill="#2456f0" opacity="0.86"/><rect x="557" y="453.1" width="115" height="1.4" fill="#070786" opacity="0.71"/><rect x="638" y="380.5" width="30" height="1.3" fill="#0c10b8" opacity="0.69"/><rect x="545" y="381.8" width="76" height="0.9" fill="#0a0aa6" opacity="0.78"/><rect x="684" y="370.0" width="39" height="0.8" fill="#0a0aa6" opacity="0.67"/><rect x="562" y="425.6" width="50" height="1.1" fill="#2a6af4" opacity="0.49"/><rect x="358" y="353.2" width="59" height="1.0" fill="#0a0aa6" opacity="0.75"/><rect x="444" y="409.2" width="124" height="1.4" fill="#3c8cf6" opacity="0.44"/><rect x="467" y="454.6" width="50" height="1.4" fill="#080892" opacity="0.40"/><rect x="473" y="412.5" width="106" height="0.9" fill="#0c10b8" opacity="0.76"/><rect x="371" y="442.0" width="137" height="1.5" fill="#0a0aa6" opacity="0.89"/><rect x="391" y="411.1" width="115" height="0.7" fill="#0c10b8" opacity="0.65"/><rect x="596" y="340.1" width="86" height="0.7" fill="#070786" opacity="0.80"/><rect x="501" y="351.8" width="111" height="1.4" fill="#080892" opacity="0.64"/><rect x="668" y="487.1" width="87" height="1.5" fill="#070786" opacity="0.44"/><rect x="622" y="364.9" width="95" height="0.8" fill="#0c10b8" opacity="0.66"/><rect x="672" y="474.6" width="134" height="1.2" fill="#070786" opacity="0.55"/><rect x="517" y="362.7" width="50" height="1.1" fill="#0c10b8" opacity="0.65"/><rect x="494" y="419.8" width="75" height="1.3" fill="#2a6af4" opacity="0.68"/><rect x="662" y="405.6" width="82" height="1.4" fill="#0a0aa6" opacity="0.80"/><rect x="336" y="396.5" width="79" height="1.4" fill="#58b0fa" opacity="0.85"/><rect x="455" y="404.4" width="29" height="0.9" fill="#3c8cf6" opacity="0.75"/><rect x="377" y="459.5" width="111" height="1.0" fill="#3c8cf6" opacity="0.58"/><rect x="521" y="422.9" width="131" height="1.2" fill="#3070f4" opacity="0.76"/><rect x="437" y="429.2" width="77" height="1.1" fill="#0a0aa6" opacity="0.48"/><rect x="499" y="369.0" width="131" height="1.2" fill="#080892" opacity="0.83"/><rect x="651" y="365.8" width="64" height="1.0" fill="#0c10b8" opacity="0.86"/><rect x="339" y="376.0" width="55" height="1.3" fill="#0a0aa6" opacity="0.53"/><rect x="505" y="355.5" width="113" height="0.9" fill="#070786" opacity="0.71"/><rect x="561" y="449.7" width="139" height="1.5" fill="#2c5cf2" opacity="0.46"/><rect x="610" y="407.8" width="85" height="0.7" fill="#080892" opacity="0.78"/><rect x="344" y="419.5" width="48" height="0.9" fill="#070786" opacity="0.82"/><rect x="520" y="467.4" width="42" height="1.2" fill="#0a0aa6" opacity="0.44"/><rect x="494" y="358.0" width="79" height="1.2" fill="#070786" opacity="0.41"/><rect x="450" y="429.1" width="70" height="1.0" fill="#080892" opacity="0.86"/><rect x="416" y="418.5" width="36" height="1.4" fill="#2a6af4" opacity="0.84"/><rect x="489" y="459.3" width="148" height="1.3" fill="#080892" opacity="0.53"/><rect x="615" y="467.7" width="76" height="1.4" fill="#080892" opacity="0.84"/><rect x="449" y="428.4" width="115" height="0.8" fill="#080892" opacity="0.57"/><rect x="686" y="401.7" width="138" height="0.7" fill="#2456f0" opacity="0.54"/><rect x="552" y="469.8" width="96" height="1.1" fill="#080892" opacity="0.59"/><rect x="594" y="482.3" width="148" height="0.7" fill="#0a0aa6" opacity="0.71"/><rect x="489" y="436.9" width="120" height="1.2" fill="#58b0fa" opacity="0.41"/><rect x="508" y="376.7" width="88" height="1.5" fill="#2456f0" opacity="0.68"/><rect x="508" y="470.2" width="109" height="1.5" fill="#0a0aa6" opacity="0.59"/><rect x="632" y="474.1" width="93" height="1.2" fill="#080892" opacity="0.61"/><rect x="527" y="406.3" width="71" height="0.9" fill="#58b0fa" opacity="0.73"/><rect x="588" y="415.3" width="28" height="1.3" fill="#3070f4" opacity="0.69"/><rect x="443" y="421.6" width="137" height="1.3" fill="#3070f4" opacity="0.43"/><rect x="608" y="477.1" width="53" height="1.3" fill="#0a0aa6" opacity="0.53"/><rect x="665" y="448.5" width="115" height="1.1" fill="#2a6af4" opacity="0.89"/><rect x="305" y="441.8" width="77" height="0.8" fill="#0a0aa6" opacity="0.83"/><rect x="464" y="391.2" width="108" height="1.1" fill="#2456f0" opacity="0.53"/><rect x="500" y="417.7" width="150" height="1.5" fill="#3070f4" opacity="0.77"/><rect x="603" y="368.3" width="103" height="1.0" fill="#2456f0" opacity="0.54"/><rect x="362" y="427.4" width="60" height="0.9" fill="#2c5cf2" opacity="0.88"/><rect x="641" y="407.3" width="30" height="0.7" fill="#080892" opacity="0.54"/><rect x="375" y="398.8" width="60" height="1.3" fill="#0a0aa6" opacity="0.86"/><rect x="481" y="367.1" width="69" height="1.0" fill="#2456f0" opacity="0.65"/><rect x="466" y="366.7" width="128" height="1.4" fill="#0a0aa6" opacity="0.78"/><rect x="613" y="398.8" width="71" height="1.2" fill="#070786" opacity="0.89"/><rect x="620" y="381.6" width="48" height="1.2" fill="#3070f4" opacity="0.69"/><rect x="319" y="402.8" width="96" height="1.1" fill="#2c5cf2" opacity="0.74"/><rect x="411" y="384.9" width="139" height="1.2" fill="#0a0aa6" opacity="0.75"/><rect x="400" y="406.4" width="43" height="1.0" fill="#0c10b8" opacity="0.76"/><rect x="464" y="392.3" width="99" height="1.4" fill="#3070f4" opacity="0.74"/><rect x="471" y="382.7" width="53" height="1.5" fill="#2456f0" opacity="0.76"/><rect x="295" y="408.8" width="110" height="1.2" fill="#2456f0" opacity="0.80"/><rect x="504" y="437.9" width="130" height="1.2" fill="#58b0fa" opacity="0.49"/><rect x="614" y="444.5" width="53" height="0.7" fill="#0c10b8" opacity="0.48"/><rect x="311" y="384.5" width="93" height="1.3" fill="#58b0fa" opacity="0.44"/><rect x="319" y="361.0" width="104" height="0.8" fill="#0c10b8" opacity="0.77"/><rect x="483" y="425.7" width="138" height="1.0" fill="#3c8cf6" opacity="0.63"/><rect x="557" y="386.6" width="87" height="1.1" fill="#0c10b8" opacity="0.76"/><rect x="592" y="438.3" width="148" height="1.0" fill="#070786" opacity="0.40"/><rect x="673" y="387.1" width="105" height="1.1" fill="#58b0fa" opacity="0.76"/><rect x="656" y="453.6" width="56" height="0.8" fill="#070786" opacity="0.72"/><rect x="457" y="427.2" width="62" height="1.5" fill="#58b0fa" opacity="0.43"/><rect x="348" y="385.9" width="140" height="1.4" fill="#3070f4" opacity="0.78"/><rect x="412" y="353.9" width="50" height="1.0" fill="#0a0aa6" opacity="0.69"/><rect x="376" y="418.0" width="48" height="0.9" fill="#2c5cf2" opacity="0.49"/><rect x="667" y="448.4" width="94" height="1.4" fill="#2c5cf2" opacity="0.64"/><rect x="480" y="395.7" width="53" height="0.7" fill="#0a0aa6" opacity="0.87"/><rect x="604" y="449.3" width="32" height="1.4" fill="#0c10b8" opacity="0.85"/><rect x="608" y="463.1" width="114" height="1.2" fill="#070786" opacity="0.48"/><rect x="653" y="351.7" width="126" height="0.8" fill="#2456f0" opacity="0.77"/><rect x="346" y="420.1" width="121" height="0.7" fill="#2a6af4" opacity="0.81"/><rect x="427" y="445.1" width="102" height="1.1" fill="#0a0aa6" opacity="0.84"/><rect x="523" y="432.9" width="132" height="0.9" fill="#3070f4" opacity="0.79"/><rect x="601" y="395.0" width="80" height="0.7" fill="#0a0aa6" opacity="0.61"/><rect x="413" y="406.4" width="76" height="1.1" fill="#0c10b8" opacity="0.90"/><rect x="563" y="429.1" width="38" height="1.0" fill="#2a6af4" opacity="0.63"/><rect x="290" y="458.4" width="72" height="1.3" fill="#070786" opacity="0.52"/><rect x="632" y="417.1" width="131" height="1.3" fill="#2a6af4" opacity="0.85"/><rect x="671" y="349.8" width="119" height="1.1" fill="#0c10b8" opacity="0.44"/><rect x="418" y="372.8" width="143" height="1.2" fill="#0a0aa6" opacity="0.76"/><rect x="326" y="388.5" width="103" height="0.8" fill="#0a0aa6" opacity="0.72"/><rect x="624" y="358.3" width="99" height="0.8" fill="#2a6af4" opacity="0.51"/><rect x="597" y="358.0" width="68" height="1.4" fill="#58b0fa" opacity="0.86"/><rect x="618" y="353.7" width="73" height="1.0" fill="#3c8cf6" opacity="0.61"/><rect x="683" y="325.9" width="124" height="1.2" fill="#0c10b8" opacity="0.70"/><rect x="409" y="354.0" width="80" height="1.1" fill="#0c10b8" opacity="0.50"/><rect x="533" y="385.9" width="45" height="1.3" fill="#2a6af4" opacity="0.85"/><rect x="493" y="412.9" width="97" height="0.9" fill="#2c5cf2" opacity="0.87"/><rect x="515" y="467.1" width="28" height="1.2" fill="#080892" opacity="0.79"/><rect x="567" y="357.5" width="66" height="1.4" fill="#070786" opacity="0.58"/><rect x="340" y="402.9" width="138" height="1.1" fill="#3070f4" opacity="0.68"/><rect x="687" y="417.2" width="127" height="1.2" fill="#3070f4" opacity="0.46"/><rect x="383" y="442.7" width="97" height="1.4" fill="#2456f0" opacity="0.49"/><rect x="448" y="412.3" width="123" height="1.4" fill="#2a6af4" opacity="0.90"/><rect x="534" y="358.8" width="105" height="1.3" fill="#070786" opacity="0.48"/><rect x="441" y="397.3" width="96" height="0.8" fill="#2c5cf2" opacity="0.66"/><rect x="307" y="381.0" width="123" height="1.3" fill="#2456f0" opacity="0.79"/><rect x="475" y="396.3" width="76" height="1.2" fill="#2a6af4" opacity="0.74"/><rect x="645" y="446.9" width="83" height="1.4" fill="#070786" opacity="0.75"/><rect x="652" y="458.1" width="91" height="1.1" fill="#2a6af4" opacity="0.62"/><rect x="405" y="451.5" width="102" height="1.0" fill="#0a0aa6" opacity="0.59"/><rect x="384" y="387.4" width="131" height="0.9" fill="#0a0aa6" opacity="0.84"/><rect x="498" y="463.7" width="55" height="0.9" fill="#0a0aa6" opacity="0.60"/><rect x="676" y="363.6" width="108" height="1.4" fill="#3070f4" opacity="0.61"/><rect x="456" y="440.6" width="40" height="0.8" fill="#3070f4" opacity="0.66"/><rect x="285" y="366.3" width="55" height="0.9" fill="#070786" opacity="0.56"/><rect x="342" y="358.9" width="112" height="0.9" fill="#070786" opacity="0.55"/><rect x="487" y="401.3" width="142" height="1.5" fill="#2456f0" opacity="0.64"/><rect x="648" y="362.4" width="49" height="1.4" fill="#3070f4" opacity="0.58"/><rect x="688" y="402.6" width="50" height="1.2" fill="#3070f4" opacity="0.50"/><rect x="409" y="448.8" width="127" height="1.5" fill="#2a6af4" opacity="0.54"/><rect x="567" y="395.5" width="142" height="1.1" fill="#0c10b8" opacity="0.44"/><rect x="565" y="369.7" width="59" height="1.3" fill="#3070f4" opacity="0.65"/><rect x="497" y="382.9" width="39" height="1.1" fill="#3070f4" opacity="0.89"/><rect x="397" y="450.5" width="105" height="0.8" fill="#080892" opacity="0.89"/><rect x="652" y="398.0" width="26" height="1.2" fill="#2c5cf2" opacity="0.67"/><rect x="400" y="398.6" width="119" height="0.9" fill="#3c8cf6" opacity="0.54"/><rect x="685" y="414.6" width="29" height="1.1" fill="#3c8cf6" opacity="0.78"/><rect x="309" y="394.3" width="33" height="1.3" fill="#070786" opacity="0.85"/><rect x="494" y="385.0" width="88" height="1.4" fill="#2a6af4" opacity="0.74"/><rect x="526" y="409.7" width="121" height="0.8" fill="#080892" opacity="0.62"/><rect x="604" y="432.3" width="124" height="0.9" fill="#2456f0" opacity="0.64"/><rect x="391" y="376.3" width="50" height="1.5" fill="#070786" opacity="0.43"/><rect x="346" y="401.3" width="27" height="1.1" fill="#0c10b8" opacity="0.62"/><rect x="314" y="400.6" width="138" height="1.2" fill="#2a6af4" opacity="0.67"/><rect x="307" y="439.1" width="78" height="1.3" fill="#3c8cf6" opacity="0.81"/><rect x="321" y="433.2" width="128" height="0.8" fill="#070786" opacity="0.53"/><rect x="310" y="369.6" width="76" height="1.0" fill="#070786" opacity="0.51"/><rect x="591" y="475.2" width="100" height="0.8" fill="#58b0fa" opacity="0.77"/><rect x="382" y="409.4" width="136" height="0.8" fill="#0a0aa6" opacity="0.60"/><rect x="679" y="373.7" width="110" height="1.3" fill="#2a6af4" opacity="0.89"/><rect x="509" y="420.7" width="55" height="1.1" fill="#2a6af4" opacity="0.87"/><rect x="373" y="392.0" width="45" height="1.2" fill="#2c5cf2" opacity="0.90"/><rect x="659" y="443.6" width="47" height="1.4" fill="#2c5cf2" opacity="0.87"/><rect x="372" y="375.5" width="68" height="0.8" fill="#0a0aa6" opacity="0.67"/><rect x="526" y="362.3" width="120" height="1.1" fill="#3c8cf6" opacity="0.65"/><rect x="368" y="420.9" width="73" height="0.8" fill="#58b0fa" opacity="0.75"/><rect x="495" y="389.7" width="118" height="1.1" fill="#2a6af4" opacity="0.68"/><rect x="431" y="423.4" width="44" height="1.4" fill="#2a6af4" opacity="0.58"/><rect x="293" y="436.2" width="65" height="1.0" fill="#0a0aa6" opacity="0.44"/><rect x="407" y="449.1" width="101" height="1.1" fill="#0a0aa6" opacity="0.49"/><rect x="411" y="408.5" width="78" height="1.1" fill="#3c8cf6" opacity="0.47"/><rect x="468" y="429.7" width="72" height="1.4" fill="#3070f4" opacity="0.82"/><rect x="442" y="410.8" width="133" height="0.9" fill="#3c8cf6" opacity="0.55"/><rect x="629" y="383.0" width="118" height="1.1" fill="#2a6af4" opacity="0.41"/><rect x="657" y="447.3" width="52" height="1.3" fill="#0a0aa6" opacity="0.73"/><rect x="602" y="472.0" width="57" height="1.3" fill="#080892" opacity="0.46"/><rect x="400" y="406.2" width="113" height="0.9" fill="#2456f0" opacity="0.86"/><rect x="554" y="367.6" width="55" height="0.8" fill="#0c10b8" opacity="0.57"/><rect x="389" y="398.5" width="132" height="0.9" fill="#2c5cf2" opacity="0.86"/><rect x="655" y="469.1" width="59" height="1.0" fill="#0a0aa6" opacity="0.82"/><rect x="314" y="385.0" width="29" height="1.0" fill="#0c10b8" opacity="0.59"/><rect x="545" y="380.2" width="73" height="1.0" fill="#080892" opacity="0.85"/><rect x="597" y="338.2" width="103" height="1.2" fill="#080892" opacity="0.61"/><rect x="641" y="394.1" width="73" height="1.4" fill="#58b0fa" opacity="0.42"/><rect x="485" y="363.2" width="84" height="0.7" fill="#0c10b8" opacity="0.70"/><rect x="380" y="381.7" width="25" height="1.1" fill="#3c8cf6" opacity="0.60"/><rect x="595" y="370.8" width="35" height="1.4" fill="#3070f4" opacity="0.84"/><rect x="425" y="428.0" width="136" height="1.0" fill="#0c10b8" opacity="0.76"/><rect x="619" y="435.3" width="45" height="1.2" fill="#080892" opacity="0.65"/><rect x="434" y="414.0" width="109" height="1.1" fill="#2456f0" opacity="0.72"/><rect x="640" y="384.8" width="149" height="1.4" fill="#080892" opacity="0.84"/><rect x="301" y="386.1" width="103" height="1.0" fill="#070786" opacity="0.64"/><rect x="608" y="384.4" width="74" height="1.3" fill="#3070f4" opacity="0.53"/><rect x="632" y="439.0" width="51" height="1.2" fill="#2456f0" opacity="0.46"/><rect x="537" y="472.9" width="129" height="1.3" fill="#080892" opacity="0.46"/><rect x="549" y="389.7" width="147" height="1.1" fill="#080892" opacity="0.75"/><rect x="563" y="446.7" width="77" height="1.2" fill="#0c10b8" opacity="0.60"/><rect x="349" y="454.7" width="150" height="1.4" fill="#0a0aa6" opacity="0.50"/><rect x="449" y="391.2" width="138" height="1.4" fill="#2a6af4" opacity="0.83"/><rect x="609" y="357.0" width="130" height="0.9" fill="#58b0fa" opacity="0.60"/><rect x="558" y="422.6" width="52" height="0.9" fill="#070786" opacity="0.83"/><rect x="642" y="398.1" width="79" height="0.8" fill="#0c10b8" opacity="0.84"/><rect x="538" y="377.3" width="59" height="0.9" fill="#2456f0" opacity="0.64"/><rect x="346" y="392.2" width="26" height="1.3" fill="#2a6af4" opacity="0.74"/><rect x="689" y="327.3" width="50" height="1.4" fill="#080892" opacity="0.64"/><rect x="511" y="396.6" width="52" height="1.2" fill="#070786" opacity="0.81"/><rect x="635" y="367.4" width="149" height="1.1" fill="#2456f0" opacity="0.82"/><rect x="668" y="443.2" width="92" height="1.2" fill="#2a6af4" opacity="0.54"/><rect x="493" y="351.9" width="26" height="0.9" fill="#0a0aa6" opacity="0.88"/><rect x="606" y="333.7" width="117" height="1.0" fill="#080892" opacity="0.80"/><rect x="664" y="459.2" width="85" height="1.4" fill="#0a0aa6" opacity="0.60"/><rect x="519" y="456.5" width="53" height="1.0" fill="#0a0aa6" opacity="0.58"/><rect x="539" y="427.7" width="81" height="0.9" fill="#0c10b8" opacity="0.43"/><rect x="421" y="423.9" width="118" height="0.9" fill="#2456f0" opacity="0.77"/><rect x="426" y="412.1" width="44" height="1.0" fill="#080892" opacity="0.49"/><rect x="448" y="354.4" width="65" height="1.1" fill="#0a0aa6" opacity="0.88"/><rect x="312" y="374.5" width="99" height="1.2" fill="#0c10b8" opacity="0.56"/><rect x="450" y="404.1" width="113" height="0.8" fill="#070786" opacity="0.54"/><rect x="642" y="435.1" width="122" height="1.1" fill="#0c10b8" opacity="0.41"/><rect x="371" y="432.3" width="102" height="1.4" fill="#0a0aa6" opacity="0.83"/><rect x="660" y="426.7" width="40" height="1.3" fill="#2c5cf2" opacity="0.77"/><rect x="488" y="399.4" width="72" height="1.1" fill="#58b0fa" opacity="0.42"/><rect x="466" y="453.2" width="99" height="1.2" fill="#070786" opacity="0.87"/><rect x="584" y="358.4" width="64" height="1.3" fill="#0c10b8" opacity="0.89"/><rect x="590" y="392.4" width="137" height="0.8" fill="#080892" opacity="0.49"/><rect x="621" y="472.3" width="125" height="1.1" fill="#080892" opacity="0.90"/><rect x="387" y="359.1" width="126" height="1.1" fill="#0c10b8" opacity="0.67"/><rect x="675" y="464.8" width="55" height="0.8" fill="#2456f0" opacity="0.62"/><rect x="609" y="446.1" width="132" height="1.3" fill="#0a0aa6" opacity="0.67"/><rect x="614" y="465.5" width="47" height="1.0" fill="#080892" opacity="0.86"/><rect x="333" y="457.1" width="48" height="1.0" fill="#0c10b8" opacity="0.82"/><rect x="321" y="419.9" width="106" height="1.1" fill="#0a0aa6" opacity="0.56"/><rect x="438" y="457.3" width="127" height="1.3" fill="#070786" opacity="0.82"/><rect x="566" y="466.7" width="48" height="0.8" fill="#080892" opacity="0.75"/><rect x="390" y="403.3" width="68" height="1.2" fill="#2a6af4" opacity="0.55"/><rect x="583" y="338.1" width="70" height="0.9" fill="#3c8cf6" opacity="0.60"/><rect x="437" y="368.1" width="102" height="0.9" fill="#070786" opacity="0.47"/><rect x="570" y="356.0" width="54" height="1.2" fill="#2c5cf2" opacity="0.54"/><rect x="559" y="457.7" width="82" height="1.4" fill="#2a6af4" opacity="0.59"/></g>
<g filter="url(#bl2)"><ellipse cx="292" cy="372.5" rx="2.3" ry="1" fill="#fff"/><ellipse cx="292" cy="385" rx="2.3" ry="1" fill="#6fd0ff"/><ellipse cx="292" cy="392" rx="2.3" ry="1" fill="#6fd0ff"/><ellipse cx="292" cy="399.6" rx="2.3" ry="1" fill="#6fd0ff"/><ellipse cx="292" cy="407" rx="2.3" ry="1" fill="#6fd0ff"/><ellipse cx="292" cy="414.9" rx="2.3" ry="1" fill="#6fd0ff"/><ellipse cx="292" cy="422" rx="2.3" ry="1" fill="#6fd0ff"/><ellipse cx="292" cy="429" rx="2.3" ry="1" fill="#6fd0ff"/><ellipse cx="292" cy="440.5" rx="2.3" ry="1" fill="#fff"/></g>
<g filter="url(#bl2)"><rect x="476" y="368.0" width="19" height="0.8" fill="#a8bcec" opacity="0.7"/><rect x="476" y="371.1" width="19" height="0.8" fill="#a8bcec" opacity="0.7"/><rect x="476" y="374.1" width="19" height="0.8" fill="#a8bcec" opacity="0.7"/><rect x="476" y="377.1" width="19" height="0.8" fill="#a8bcec" opacity="0.7"/><rect x="476" y="380.2" width="19" height="0.8" fill="#a8bcec" opacity="0.7"/><rect x="476" y="383.2" width="19" height="0.8" fill="#a8bcec" opacity="0.7"/><rect x="476" y="386.3" width="19" height="0.8" fill="#a8bcec" opacity="0.7"/><rect x="476" y="389.4" width="19" height="0.8" fill="#a8bcec" opacity="0.7"/><rect x="476" y="392.4" width="19" height="0.8" fill="#a8bcec" opacity="0.7"/><rect x="476" y="395.4" width="19" height="0.8" fill="#a8bcec" opacity="0.7"/><rect x="476" y="398.5" width="19" height="0.8" fill="#a8bcec" opacity="0.7"/><rect x="476" y="401.6" width="19" height="0.8" fill="#a8bcec" opacity="0.7"/><rect x="476" y="404.6" width="19" height="0.8" fill="#a8bcec" opacity="0.7"/><rect x="476" y="407.6" width="19" height="0.8" fill="#a8bcec" opacity="0.7"/><rect x="476" y="410.7" width="19" height="0.8" fill="#a8bcec" opacity="0.7"/><rect x="476" y="413.8" width="19" height="0.8" fill="#a8bcec" opacity="0.7"/><rect x="476" y="416.8" width="19" height="0.8" fill="#a8bcec" opacity="0.7"/><rect x="476" y="419.9" width="19" height="0.8" fill="#a8bcec" opacity="0.7"/><rect x="476" y="422.9" width="19" height="0.8" fill="#a8bcec" opacity="0.7"/><rect x="476" y="425.9" width="19" height="0.8" fill="#a8bcec" opacity="0.7"/><rect x="476" y="429.0" width="19" height="0.8" fill="#a8bcec" opacity="0.7"/><rect x="476" y="432.1" width="19" height="0.8" fill="#a8bcec" opacity="0.7"/><rect x="476" y="435.1" width="19" height="0.8" fill="#a8bcec" opacity="0.7"/><rect x="476" y="438.1" width="19" height="0.8" fill="#a8bcec" opacity="0.7"/><rect x="476" y="441.2" width="19" height="0.8" fill="#a8bcec" opacity="0.7"/><rect x="476" y="444.2" width="19" height="0.8" fill="#a8bcec" opacity="0.7"/></g>
</g>
<path d="M278.5 386.7 H500 M278.5 407 H500 M278.5 427.3 H500" stroke="#b028cc" stroke-width="2" fill="none" opacity="0.92"/>
<path d="M500 386.7 H693.5 M500 407 H693.5 M500 427.3 H693.5" stroke="#9a30d8" stroke-width="1.8" fill="none" opacity="0.78"/>
<g filter="url(#bl2)"><path d="M423 386.5 L437 385.0 L488 384.6 L497 386.5 L488 388.4 L437 388.0 Z" fill="#fff"/><path d="M417 386.5 L437 384.1 L488 383.7 L500 386.5 L488 389.3 L437 388.9 Z" fill="#f4d6f6" opacity="0.55"/><path d="M427 407 L440 405.5 L488 405.1 L496 407 L488 408.9 L440 408.5 Z" fill="#fff"/><path d="M421 407 L440 404.6 L488 404.2 L499 407 L488 409.8 L440 409.4 Z" fill="#f4d6f6" opacity="0.55"/><path d="M425 427.3 L438 425.8 L488 425.40000000000003 L497 427.3 L488 429.2 L438 428.8 Z" fill="#fff"/><path d="M419 427.3 L438 424.90000000000003 L488 424.5 L500 427.3 L488 430.1 L438 429.7 Z" fill="#f4d6f6" opacity="0.55"/></g>
<path d="M278.5 345.8C282.1 345.9 291.4 346.0 300.0 346.2C308.6 346.4 321.7 346.8 330.0 347.2C338.3 347.6 345.0 348.1 350.0 348.4C355.0 348.7 356.2 348.6 360.0 349.1C363.8 349.6 368.9 350.5 373.0 351.3C377.1 352.1 381.5 353.1 384.3 353.9C387.1 354.7 388.0 355.2 389.6 356.1C391.2 357.0 392.6 358.0 393.9 359.1C395.2 360.2 396.2 361.6 397.4 363.0C398.6 364.4 399.6 365.8 400.9 367.8C402.2 369.8 403.8 372.2 405.2 374.8C406.6 377.4 408.4 380.9 409.6 383.5C410.8 386.1 411.4 387.6 412.2 390.4C413.0 393.1 413.5 395.9 414.3 400.0C415.1 404.1 416.1 409.7 417.0 415.0C417.9 420.3 418.7 426.2 419.5 432.0C420.3 437.8 421.2 443.9 422.0 450.0C422.8 456.1 424.0 465.4 424.4 468.5" stroke="#b81cae" stroke-width="1.8" fill="none"/>
<path d="M278.5 345.8C282.1 345.9 291.4 346.0 300.0 346.2C308.6 346.4 321.7 346.8 330.0 347.1C338.3 347.4 345.0 347.9 350.0 348.2C355.0 348.5 354.7 348.3 360.0 349.0C365.3 349.7 376.6 351.4 381.7 352.2C386.8 352.9 387.8 352.9 390.4 353.5C393.0 354.1 395.4 354.8 397.4 355.7C399.4 356.6 401.0 357.5 402.6 358.7C404.2 359.9 405.7 361.2 407.0 362.6C408.3 364.0 409.2 365.0 410.4 367.0C411.5 369.0 412.9 372.4 413.9 374.8C414.9 377.2 415.6 379.1 416.5 381.7C417.4 384.3 418.3 387.3 419.1 390.4C419.9 393.4 420.6 395.9 421.3 400.0C422.0 404.1 422.8 409.7 423.5 415.0C424.2 420.3 424.9 426.2 425.5 432.0C426.1 437.8 426.8 443.9 427.3 450.0C427.9 456.1 428.6 465.4 428.8 468.5" stroke="#b81cae" stroke-width="1.8" fill="none"/>
<path d="M485 345 L483.7 468.5 M485.2 345 L486.9 468.5" stroke="#b81cae" stroke-width="1.8" fill="none"/>
<path d="M497.2 468.5C497.4 465.4 498.0 456.4 498.4 450.0C498.8 443.6 499.3 436.3 499.8 430.0C500.3 423.7 500.7 417.0 501.2 412.0C501.7 407.0 502.0 404.8 502.6 400.0C503.2 395.2 504.1 388.4 504.8 383.5C505.5 378.6 506.4 373.9 507.0 370.4C507.6 366.9 508.1 364.8 508.7 362.6C509.3 360.4 509.8 358.8 510.4 357.4C511.0 355.9 511.7 354.8 512.6 353.9C513.5 352.9 514.2 352.3 515.7 351.7C517.2 351.1 519.0 350.5 521.7 350.0C524.5 349.5 528.3 349.1 532.2 348.7C536.1 348.3 540.6 348.1 545.2 347.8C549.8 347.6 553.2 347.4 560.0 347.2C566.8 347.0 576.0 346.6 586.0 346.4C596.0 346.2 607.7 346.1 620.0 346.0C632.3 345.9 647.8 345.9 660.0 345.9C672.2 345.9 687.9 345.8 693.5 345.8" stroke="#b81cae" stroke-width="1.8" fill="none"/>
<path d="M499.8 468.5C500.0 465.4 500.5 456.4 500.8 450.0C501.1 443.6 501.5 436.3 501.8 430.0C502.1 423.7 502.5 417.0 502.8 412.0C503.1 407.0 503.2 404.8 503.6 400.0C504.0 395.2 504.7 388.4 505.3 383.5C505.9 378.6 506.4 373.9 507.0 370.4C507.6 366.9 508.1 364.8 508.7 362.6C509.3 360.4 509.8 358.8 510.4 357.4C511.0 355.9 511.7 354.8 512.6 353.9C513.5 352.9 514.2 352.3 515.7 351.7C517.2 351.1 519.0 350.5 521.7 350.0C524.5 349.5 528.3 349.1 532.2 348.7C536.1 348.3 540.6 348.1 545.2 347.8C549.8 347.6 553.2 347.4 560.0 347.2C566.8 347.0 576.0 346.6 586.0 346.4C596.0 346.2 607.7 346.1 620.0 346.0C632.3 345.9 647.8 345.9 660.0 345.9C672.2 345.9 687.9 345.8 693.5 345.8" stroke="#b81cae" stroke-width="1.8" fill="none"/>
<rect x="586.2" y="345" width="2.6" height="2.4" fill="#a89a6a"/>
<path d="M278.5 345.5V468.5" stroke="#555" stroke-width="0.8" fill="none"/><path d="M278.5 468.5H693.5" stroke="#333" stroke-width="1" fill="none"/>
<text x="275" y="361.1" font-size="8.6" fill="#4c4c4c" text-anchor="end">0.15</text><text x="275" y="377.5" font-size="8.6" fill="#4c4c4c" text-anchor="end">0.1</text><text x="275" y="393.8" font-size="8.6" fill="#4c4c4c" text-anchor="end">0.05</text><text x="275" y="410.2" font-size="8.6" fill="#4c4c4c" text-anchor="end">0</text><text x="275" y="426.6" font-size="8.6" fill="#4c4c4c" text-anchor="end">-0.05</text><text x="275" y="443.1" font-size="8.6" fill="#4c4c4c" text-anchor="end">-0.1</text><text x="275" y="459.6" font-size="8.6" fill="#4c4c4c" text-anchor="end">-0.15</text><text x="344" y="480.3" font-size="8.6" fill="#4c4c4c" text-anchor="middle">5</text><text x="410.7" y="480.3" font-size="8.6" fill="#4c4c4c" text-anchor="middle">10</text><text x="477.4" y="480.3" font-size="8.6" fill="#4c4c4c" text-anchor="middle">15</text><text x="544.1" y="480.3" font-size="8.6" fill="#4c4c4c" text-anchor="middle">20</text><text x="610.8" y="480.3" font-size="8.6" fill="#4c4c4c" text-anchor="middle">25</text><text x="677.5" y="480.3" font-size="8.6" fill="#4c4c4c" text-anchor="middle">30</text>
<text x="486" y="341.4" font-size="9.3" font-weight="bold" fill="#111" text-anchor="middle">BER</text>
<text x="486" y="491.6" font-size="9" fill="#4c4c4c" text-anchor="middle">[ ps ]</text>
<text transform="translate(252 407.3) rotate(-90)" font-size="9" fill="#4c4c4c" text-anchor="middle">[ V ]</text>
<text x="697.5" y="377.0" font-size="8.6" fill="#bf3fb8">10<tspan dy="-3.2" font-size="5.6">-5</tspan></text><text x="697.5" y="409.5" font-size="8.6" fill="#bf3fb8">10<tspan dy="-3.2" font-size="5.6">-10</tspan></text><text x="697.5" y="440.0" font-size="8.6" fill="#bf3fb8">10<tspan dy="-3.2" font-size="5.6">-15</tspan></text><text x="697.5" y="470.6" font-size="8.6" fill="#bf3fb8">10<tspan dy="-3.2" font-size="5.6">-20</tspan></text>
<text transform="translate(730 407) rotate(-90)" font-size="9" fill="#bf3fb8" text-anchor="middle">[ Probability ]</text>
</svg>
<div class="abs" style="left:208px;top:493px;width:537px;height:1px;background:#cfcfcf"></div>
<div class="abs" style="left:208px;top:494px;width:537px;height:16px;background:#fff;border-bottom:1px solid #d2d2d2;border-top:1px solid #d4d4d4"></div>
<div class="abs" style="left:210px;top:499px;width:2px;height:7px;background:#c4c4c4"></div>
<div class="abs" style="left:214.5px;top:494px;width:76px;height:16.5px;background:#f5f5f5;border-left:1px solid #d2d2d2;border-right:1px solid #d2d2d2;border-top:2.4px solid #1e4b73"></div>
<div class="t" style="left:220.0px;top:499.0px;font-size:9px;color:#444;transform:scaleX(0.880);transform-origin:0 0;">Pulse Response</div>
<div class="t" style="left:280.2px;top:498.1px;font-size:10.5px;color:#505050;">&#215;</div>
<div class="dots" style="left:730px;top:499.5px;width:1.5px;height:1.5px;background:#666;box-shadow:0 3px 0 #666,0 6px 0 #666"></div>
<svg class="abs" style="left:208px;top:511px" width="537" height="163" viewBox="208 511 537 163" font-family="Liberation Sans, sans-serif">
<rect x="278.2" y="524" width="415.09999999999997" height="123" fill="#fff"/>
<path d="M301.9 524V647M354.3 524V647M406.8 524V647M459.2 524V647M511.7 524V647M564.1 524V647M616.6 524V647M669.0 524V647M278.2 645.2H693.3M278.2 628.3H693.3M278.2 611.4H693.3M278.2 594.5H693.3M278.2 577.6H693.3M278.2 560.7H693.3M278.2 543.8H693.3M278.2 526.9H693.3" stroke="#e3e3e3" stroke-width="1" fill="none"/>
<path d="M278.5 628.3C288.5 628.3 343.3 628.4 353.5 628.3C363.7 628.2 354.8 628.2 355.2 627.5C355.6 626.8 356.4 624.5 356.8 623.0C357.2 621.5 358.0 619.1 358.4 616.4C358.8 613.7 359.6 607.1 360.0 603.0C360.4 598.9 361.0 590.7 361.4 586.0C361.8 581.3 362.6 572.6 363.0 568.0C363.4 563.4 364.1 555.4 364.5 551.5C364.9 547.6 365.6 541.2 366.0 538.5C366.4 535.8 366.9 532.9 367.3 531.5C367.7 530.1 368.6 528.4 369.0 528.2C369.4 528.0 370.1 529.1 370.4 530.0C370.7 530.9 371.2 533.2 371.6 535.3C372.0 537.4 373.0 542.8 373.5 546.0C374.0 549.2 375.0 556.1 375.6 559.6C376.2 563.1 377.3 568.7 378.0 572.0C378.7 575.3 380.0 581.3 380.7 584.0C381.4 586.7 382.5 590.4 383.2 592.5C383.9 594.6 385.1 598.4 385.8 600.0C386.5 601.6 387.6 603.6 388.3 604.8C389.0 606.0 390.0 607.6 390.9 608.7C391.8 609.8 393.9 612.0 395.0 613.0C396.1 614.0 397.9 615.6 399.0 616.4C400.1 617.2 401.9 618.2 403.0 618.7C404.1 619.2 405.5 620.0 407.0 620.5C408.5 621.0 412.1 622.1 414.0 622.6C415.9 623.1 419.0 623.7 421.3 624.0C423.6 624.3 428.3 624.9 431.0 625.2C433.7 625.5 438.3 625.8 441.6 626.0C444.9 626.2 451.9 626.5 456.0 626.7C460.1 626.9 466.1 627.1 472.0 627.2C477.9 627.3 490.9 627.6 500.0 627.7C509.1 627.8 526.7 628.0 540.0 628.1C553.3 628.2 579.5 628.4 600.0 628.4C620.5 628.4 681.0 628.3 693.5 628.3" stroke="#2b7bb0" stroke-width="1.1" fill="none" stroke-linejoin="round"/>
<path d="M278.5 628.3L371.5 628.3L373.5 627.8L375.6 624.5L377.2 617.0L378.7 606.3L380.2 593.0L381.7 580.0L383.0 571.5L384.3 566.5L386.2 564.3L387.6 565.8L388.8 569.8L389.7 575.0L390.3 582.0L390.9 606.3L391.8 616.0L392.9 624.5L394.5 632.0L396.0 638.7L397.2 643.5L398.0 647.0L398.5 640.0L399.0 623.5L400.0 625.3L401.0 626.6L403.0 628.3L405.0 629.2L408.0 628.3L411.0 627.6L413.0 626.5L414.2 625.5L414.7 628.0L415.2 629.2L417.0 628.2L419.2 627.2L420.8 627.6L422.3 628.4L424.0 627.8L425.3 627.0L427.0 627.7L429.4 628.3L440.0 628.5L693.5 628.3" stroke="#d0673a" stroke-width="1.1" fill="none" stroke-linejoin="round"/>
<path d="M301.9 647v-4M301.9 524v4M354.3 647v-4M354.3 524v4M406.8 647v-4M406.8 524v4M459.2 647v-4M459.2 524v4M511.7 647v-4M511.7 524v4M564.1 647v-4M564.1 524v4M616.6 647v-4M616.6 524v4M669.0 647v-4M669.0 524v4M278.2 645.2h4M693.3 645.2h-4M278.2 628.3h4M693.3 628.3h-4M278.2 611.4h4M693.3 611.4h-4M278.2 594.5h4M693.3 594.5h-4M278.2 577.6h4M693.3 577.6h-4M278.2 560.7h4M693.3 560.7h-4M278.2 543.8h4M693.3 543.8h-4M278.2 526.9h4M693.3 526.9h-4" stroke="#262626" stroke-width="1" fill="none"/>
<rect x="278.2" y="524" width="415.09999999999997" height="123" fill="none" stroke="#262626" stroke-width="1.2"/>
<text x="275.5" y="648.2" font-size="8.6" fill="#4c4c4c" text-anchor="end">-0.05</text><text x="275.5" y="631.3" font-size="8.6" fill="#4c4c4c" text-anchor="end">0</text><text x="275.5" y="614.4" font-size="8.6" fill="#4c4c4c" text-anchor="end">0.05</text><text x="275.5" y="597.5" font-size="8.6" fill="#4c4c4c" text-anchor="end">0.1</text><text x="275.5" y="580.6" font-size="8.6" fill="#4c4c4c" text-anchor="end">0.15</text><text x="275.5" y="563.7" font-size="8.6" fill="#4c4c4c" text-anchor="end">0.2</text><text x="275.5" y="546.8" font-size="8.6" fill="#4c4c4c" text-anchor="end">0.25</text><text x="275.5" y="529.9" font-size="8.6" fill="#4c4c4c" text-anchor="end">0.3</text><text x="301.9" y="660" font-size="8.6" fill="#4c4c4c" text-anchor="middle">2.2</text><text x="354.3" y="660" font-size="8.6" fill="#4c4c4c" text-anchor="middle">2.4</text><text x="406.8" y="660" font-size="8.6" fill="#4c4c4c" text-anchor="middle">2.6</text><text x="459.2" y="660" font-size="8.6" fill="#4c4c4c" text-anchor="middle">2.8</text><text x="511.7" y="660" font-size="8.6" fill="#4c4c4c" text-anchor="middle">3</text><text x="564.1" y="660" font-size="8.6" fill="#4c4c4c" text-anchor="middle">3.2</text><text x="616.6" y="660" font-size="8.6" fill="#4c4c4c" text-anchor="middle">3.4</text><text x="669.0" y="660" font-size="8.6" fill="#4c4c4c" text-anchor="middle">3.6</text>
<text x="486" y="519.4" font-size="9.3" font-weight="bold" fill="#111" text-anchor="middle">Pulse Response</text>
<text x="486" y="672" font-size="9" fill="#4c4c4c" text-anchor="middle">[ s ]</text>
<text x="673" y="670.5" font-size="8.2" fill="#4c4c4c">×10<tspan dy="-3" font-size="5.6">-9</tspan></text>
<text transform="translate(251.5 585.5) rotate(-90)" font-size="9" fill="#4c4c4c" text-anchor="middle">[ V ]</text>
<rect x="609.5" y="529.6" width="76.3" height="21.7" rx="0.8" fill="#fff" stroke="#3a3a3a" stroke-width="1.1"/>
<path d="M612.2 536.0h26" stroke="#2b7bb0" stroke-width="1.1"/><path d="M612.2 545.1h26" stroke="#d0673a" stroke-width="1.1"/>
<text x="641.3" y="537.7" font-size="7.5" fill="#4c4c4c">Unequalized</text><text x="641.3" y="547.3000000000001" font-size="7.5" fill="#4c4c4c">Equalized</text>
</svg>
<div class="abs" style="left:746px;top:493px;width:535px;height:1px;background:#cfcfcf"></div>
<div class="abs" style="left:746px;top:494px;width:535px;height:16px;background:#fff;border-bottom:1px solid #d2d2d2;border-top:1px solid #d4d4d4"></div>
<div class="abs" style="left:748px;top:499px;width:2px;height:7px;background:#c4c4c4"></div>
<div class="abs" style="left:751.5px;top:494px;width:79px;height:16.5px;background:#f5f5f5;border-left:1px solid #d2d2d2;border-right:1px solid #d2d2d2;border-top:2.4px solid #2f6da3"></div>
<div class="t" style="left:757.0px;top:499.0px;font-size:9px;color:#444;transform:scaleX(0.887);transform-origin:0 0;">PRBS Waveform</div>
<div class="t" style="left:820.2px;top:498.1px;font-size:10.5px;color:#505050;">&#215;</div>
<div class="dots" style="left:1266px;top:499.5px;width:1.5px;height:1.5px;background:#666;box-shadow:0 3px 0 #666,0 6px 0 #666"></div>
<svg class="abs" style="left:746px;top:511px" width="535" height="163" viewBox="746 511 535 163" font-family="Liberation Sans, sans-serif">
<rect x="815" y="524" width="416.29999999999995" height="123" fill="#fff"/>
<path d="M867.5 524V647M919.9 524V647M972.3 524V647M1024.7 524V647M1077.1 524V647M1129.5 524V647M1181.9 524V647M815 634.4H1231.3M815 612.8H1231.3M815 591.2H1231.3M815 569.6H1231.3M815 548.0H1231.3M815 526.4H1231.3" stroke="#e3e3e3" stroke-width="1" fill="none"/>
<clipPath id="pc"><rect x="815" y="524" width="416.29999999999995" height="123"/></clipPath>
<g clip-path="url(#pc)"><path d="M814.7 566.2C815.0 565.5 816.0 565.4 816.6 562.4C817.2 559.4 817.8 550.9 818.5 548.3C819.1 545.6 819.6 547.0 820.4 546.4C821.1 545.7 822.2 545.7 822.8 544.5C823.4 543.2 823.6 540.8 824.1 538.8C824.7 536.9 825.3 533.0 826.0 532.8C826.7 532.7 827.7 537.7 828.5 537.9C829.2 538.1 829.7 535.7 830.3 534.1C831.0 532.6 831.8 528.5 832.6 528.5C833.5 528.5 834.6 533.8 835.4 534.1C836.2 534.4 836.7 531.6 837.3 530.4C837.9 529.1 838.6 526.8 839.2 526.6C839.8 526.4 840.5 527.4 841.1 529.4C841.6 531.5 841.9 534.1 842.4 538.8C842.9 543.5 843.3 550.5 843.9 557.7C844.5 564.9 845.2 574.9 845.8 582.2C846.4 589.4 847.0 595.7 847.7 601.0C848.4 606.3 849.2 610.1 849.9 614.2C850.6 618.3 851.2 623.1 851.8 625.5C852.4 627.8 853.1 627.9 853.7 628.3C854.3 628.7 855.0 627.0 855.6 627.8C856.2 628.5 856.5 631.1 857.1 633.0C857.7 634.9 858.4 638.3 859.0 639.2C859.5 640.2 859.9 641.0 860.5 638.7C861.1 636.4 861.8 631.1 862.4 625.5C862.9 619.8 863.2 612.0 863.7 604.8C864.2 597.6 864.7 587.2 865.2 582.2C865.7 577.1 866.0 577.5 866.5 574.6C867.0 571.8 867.8 568.7 868.4 565.2C869.0 561.8 869.7 556.7 870.3 553.9C870.8 551.1 871.3 548.9 871.8 548.6C872.3 548.3 872.6 548.9 873.1 552.0C873.6 555.1 874.4 560.5 875.0 567.1C875.6 573.7 876.3 584.4 876.9 591.6C877.4 598.8 877.7 605.7 878.2 610.4C878.7 615.1 879.1 617.7 879.7 619.8C880.3 622.0 881.0 621.4 881.6 623.2C882.2 625.1 882.9 629.1 883.5 631.1C884.0 633.2 884.5 635.3 885.0 635.3C885.4 635.3 885.9 634.7 886.3 631.1C886.7 627.6 887.1 620.8 887.6 614.2C888.1 607.6 888.6 598.6 889.1 591.6C889.7 584.5 890.5 575.6 891.0 571.8C891.5 568.0 891.9 568.1 892.3 568.6C892.8 569.1 893.3 569.5 893.8 574.6C894.4 579.7 895.1 591.9 895.7 599.1C896.3 606.3 897.0 613.6 897.6 618.0C898.2 622.4 898.9 623.9 899.5 625.5C900.1 627.1 900.7 626.1 901.4 627.4C902.0 628.6 902.6 630.8 903.2 633.0C903.9 635.2 904.6 639.5 905.1 640.6C905.7 641.7 906.0 642.1 906.5 639.6C906.9 637.1 907.5 631.6 908.0 625.5C908.5 619.4 909.0 609.2 909.5 602.9C909.9 596.6 910.3 591.0 910.8 587.8C911.2 584.6 911.6 583.0 912.1 583.7C912.6 584.3 913.0 587.1 913.6 591.6C914.2 596.0 914.9 604.8 915.5 610.4C916.1 616.1 916.8 622.0 917.4 625.5C918.0 628.9 918.6 629.9 919.3 631.1C919.9 632.4 920.5 631.5 921.1 633.0C921.8 634.6 922.4 638.7 923.0 640.6C923.7 642.4 924.3 644.3 924.9 644.3C925.5 644.3 926.1 643.7 926.6 640.6C927.1 637.4 927.4 631.8 927.9 625.5C928.4 619.2 928.9 609.2 929.4 602.9C929.9 596.6 930.5 590.6 930.9 587.8C931.4 585.0 931.8 585.6 932.2 585.9C932.7 586.2 933.2 590.0 933.6 589.7C934.0 589.4 934.2 587.8 934.7 584.1C935.2 580.3 935.9 571.2 936.6 567.1C937.2 563.0 937.8 561.1 938.5 559.6C939.1 558.0 939.8 558.8 940.3 557.7C940.9 556.6 941.2 555.2 941.7 553.0C942.1 550.8 942.5 546.3 943.0 544.5C943.5 542.7 944.0 541.9 944.5 542.2C945.0 542.5 945.5 544.1 946.0 546.4C946.5 548.6 946.9 551.7 947.3 555.8C947.7 559.9 947.9 564.9 948.3 570.9C948.6 576.8 949.1 585.9 949.6 591.6C950.0 597.2 950.6 601.8 951.1 604.8C951.6 607.8 952.1 609.2 952.6 609.5C953.1 609.8 953.5 609.0 953.9 606.7C954.3 604.3 954.8 600.4 955.2 595.4C955.7 590.3 956.2 581.5 956.7 576.5C957.2 571.5 957.7 568.0 958.2 565.2C958.8 562.4 959.4 561.8 959.9 559.6C960.5 557.4 960.9 554.4 961.4 552.0C961.9 549.7 962.5 546.6 963.0 545.4C963.4 544.2 963.8 543.8 964.3 544.9C964.7 546.0 965.1 548.9 965.6 552.0C966.1 555.1 966.7 561.6 967.1 563.3C967.5 565.1 967.8 563.8 968.2 562.4C968.6 561.0 969.0 556.6 969.4 554.9C969.7 553.1 970.1 551.6 970.5 552.0C970.9 552.5 971.3 555.5 971.8 557.7C972.3 559.9 972.8 564.4 973.3 565.2C973.8 566.0 974.2 564.1 974.6 562.4C975.1 560.7 975.5 556.4 975.9 554.9C976.4 553.3 976.7 552.5 977.1 553.0C977.5 553.4 977.9 555.5 978.4 557.7C978.9 559.9 979.4 565.1 979.9 566.2C980.4 567.3 980.8 566.2 981.2 564.3C981.7 562.4 982.1 557.5 982.5 554.9C983.0 552.2 983.6 549.4 984.1 548.3C984.5 547.1 984.9 546.6 985.4 547.9C985.8 549.1 986.4 551.0 986.9 555.8C987.3 560.6 987.7 570.2 988.2 576.5C988.7 582.8 989.2 590.0 989.7 593.5C990.2 596.9 990.5 597.6 991.0 597.2C991.5 596.9 992.1 595.7 992.5 591.6C993.0 587.5 993.4 578.6 993.8 572.7C994.3 566.9 994.9 560.3 995.4 556.7C995.9 553.1 996.4 552.1 996.9 551.1C997.3 550.0 997.7 549.1 998.2 550.5C998.6 551.9 999.2 554.9 999.7 559.6C1000.2 564.2 1000.6 572.4 1001.0 578.4C1001.4 584.4 1001.9 591.9 1002.3 595.4C1002.7 598.8 1003.0 599.1 1003.5 599.1C1003.9 599.1 1004.3 598.2 1004.8 595.4C1005.2 592.5 1005.6 587.2 1006.1 582.2C1006.6 577.1 1007.1 569.9 1007.6 565.2C1008.1 560.5 1008.6 556.4 1009.1 553.9C1009.6 551.5 1010.0 551.0 1010.4 550.5C1010.9 550.0 1011.3 549.3 1011.7 551.1C1012.2 552.9 1012.8 556.6 1013.2 561.4C1013.7 566.3 1014.1 574.6 1014.6 580.3C1015.0 585.9 1015.6 592.2 1016.1 595.4C1016.5 598.5 1017.0 599.1 1017.4 599.1C1017.8 599.1 1018.1 598.5 1018.5 595.4C1018.9 592.2 1019.4 585.3 1019.8 580.3C1020.3 575.3 1020.8 569.0 1021.2 565.2C1021.6 561.4 1021.9 559.0 1022.3 557.7C1022.7 556.4 1023.2 556.0 1023.6 557.3C1024.1 558.6 1024.5 560.8 1024.9 565.2C1025.4 569.7 1026.0 578.1 1026.4 584.1C1026.9 590.0 1027.3 596.6 1027.8 601.0C1028.2 605.4 1028.8 608.5 1029.3 610.4C1029.7 612.3 1030.2 612.9 1030.6 612.3C1031.0 611.7 1031.3 608.2 1031.7 606.7C1032.1 605.1 1032.6 602.6 1033.0 602.9C1033.5 603.2 1033.9 605.1 1034.3 608.5C1034.8 612.0 1035.2 620.6 1035.7 623.6C1036.1 626.6 1036.6 627.1 1037.2 626.4C1037.7 625.8 1038.3 623.8 1038.9 619.8C1039.4 615.9 1039.9 609.2 1040.4 602.9C1040.9 596.6 1041.3 587.8 1041.9 582.2C1042.4 576.5 1043.0 571.5 1043.6 569.0C1044.1 566.5 1044.6 565.8 1045.1 567.1C1045.6 568.4 1046.1 571.8 1046.6 576.5C1047.0 581.2 1047.4 589.4 1047.9 595.4C1048.4 601.3 1048.9 608.7 1049.4 612.3C1049.9 615.9 1050.3 617.0 1050.7 617.0C1051.2 617.0 1051.8 615.9 1052.2 612.3C1052.7 608.7 1053.1 601.3 1053.5 595.4C1054.0 589.4 1054.5 581.4 1055.1 576.5C1055.6 571.6 1056.2 568.0 1056.8 566.2C1057.3 564.3 1057.8 563.8 1058.3 565.2C1058.7 566.6 1059.1 569.9 1059.6 574.6C1060.0 579.3 1060.6 588.3 1061.1 593.5C1061.6 598.6 1062.0 603.5 1062.4 605.7C1062.8 607.9 1063.1 607.8 1063.5 606.7C1063.9 605.6 1064.4 603.2 1064.9 599.1C1065.3 595.0 1065.7 587.8 1066.2 582.2C1066.6 576.5 1067.2 568.8 1067.7 565.2C1068.1 561.6 1068.5 560.5 1069.0 560.5C1069.5 560.5 1070.0 562.2 1070.5 565.2C1071.0 568.2 1071.4 574.3 1071.8 578.4C1072.3 582.5 1072.9 587.3 1073.3 589.7C1073.8 592.1 1074.2 593.5 1074.6 592.5C1075.1 591.6 1075.4 588.0 1075.8 584.1C1076.2 580.1 1076.7 572.1 1077.1 569.0C1077.5 565.8 1078.0 565.5 1078.4 565.2C1078.8 564.9 1079.1 565.8 1079.5 567.1C1080.0 568.4 1080.4 571.5 1080.9 572.7C1081.3 574.0 1081.8 575.3 1082.2 574.6C1082.6 574.0 1082.9 571.8 1083.3 569.0C1083.7 566.2 1084.2 560.5 1084.6 557.7C1085.1 554.9 1085.5 553.3 1085.9 552.0C1086.4 550.8 1087.0 550.9 1087.5 550.1C1088.0 549.4 1088.5 548.9 1089.0 547.3C1089.4 545.7 1089.8 542.0 1090.3 540.7C1090.7 539.5 1091.2 538.8 1091.6 539.8C1092.0 540.7 1092.3 543.4 1092.7 546.4C1093.1 549.4 1093.6 555.2 1094.1 557.7C1094.5 560.2 1095.0 561.4 1095.4 561.4C1095.8 561.4 1096.1 559.6 1096.5 557.7C1096.9 555.8 1097.4 551.2 1097.8 550.1C1098.3 549.0 1098.7 549.2 1099.1 551.1C1099.5 553.0 1099.9 556.6 1100.3 561.4C1100.7 566.3 1101.1 574.0 1101.6 580.3C1102.1 586.6 1102.6 593.8 1103.1 599.1C1103.6 604.5 1103.9 609.2 1104.4 612.3C1104.9 615.4 1105.4 617.2 1105.9 618.0C1106.4 618.7 1106.8 618.9 1107.2 617.0C1107.7 615.1 1108.1 610.9 1108.6 606.7C1109.0 602.4 1109.3 596.3 1109.7 591.6C1110.1 586.9 1110.6 581.4 1111.0 578.4C1111.4 575.4 1111.9 574.0 1112.3 573.7C1112.7 573.4 1113.0 575.4 1113.5 576.5C1113.9 577.6 1114.3 580.6 1114.8 580.3C1115.2 580.0 1115.7 577.8 1116.1 574.6C1116.5 571.5 1116.8 564.9 1117.2 561.4C1117.6 558.0 1118.1 555.5 1118.5 553.9C1119.0 552.3 1119.6 552.7 1120.0 552.0C1120.5 551.4 1120.9 551.7 1121.3 550.1C1121.8 548.6 1122.4 544.8 1122.8 542.6C1123.3 540.4 1123.7 537.7 1124.1 537.0C1124.6 536.2 1125.2 537.3 1125.7 537.9C1126.1 538.5 1126.5 540.6 1127.0 540.7C1127.4 540.9 1128.0 540.1 1128.5 538.8C1128.9 537.6 1129.3 534.4 1129.8 533.2C1130.3 531.9 1130.8 531.1 1131.3 531.3C1131.8 531.5 1132.2 531.9 1132.6 534.1C1133.1 536.3 1133.7 539.6 1134.1 544.5C1134.6 549.4 1135.0 556.7 1135.4 563.3C1135.9 569.9 1136.5 578.1 1137.0 584.1C1137.4 590.0 1137.8 595.8 1138.3 599.1C1138.7 602.4 1139.3 603.5 1139.8 603.8C1140.3 604.1 1140.8 603.4 1141.3 601.0C1141.8 598.6 1142.2 593.8 1142.6 589.7C1143.0 585.6 1143.5 580.0 1143.9 576.5C1144.3 573.1 1144.6 569.9 1145.1 569.0C1145.5 568.0 1145.9 569.9 1146.4 570.9C1146.8 571.8 1147.3 574.9 1147.7 574.6C1148.1 574.3 1148.4 571.5 1148.8 569.0C1149.2 566.5 1149.7 561.4 1150.1 559.6C1150.6 557.7 1151.1 557.0 1151.5 557.7C1151.9 558.3 1152.2 561.4 1152.6 563.3C1153.0 565.2 1153.5 568.7 1153.9 569.0C1154.3 569.3 1154.8 567.4 1155.2 565.2C1155.6 563.0 1155.9 557.7 1156.4 555.8C1156.8 553.9 1157.2 553.3 1157.7 553.9C1158.1 554.5 1158.6 557.5 1159.0 559.6C1159.4 561.6 1159.7 565.4 1160.1 566.2C1160.5 566.9 1161.0 566.0 1161.4 564.3C1161.9 562.5 1162.3 558.0 1162.8 555.8C1163.2 553.6 1163.8 551.9 1164.3 551.1C1164.8 550.3 1165.3 550.0 1165.8 551.1C1166.2 552.2 1166.7 553.4 1167.1 557.7C1167.5 561.9 1167.9 570.5 1168.4 576.5C1168.9 582.5 1169.5 590.0 1169.9 593.5C1170.4 596.9 1170.8 597.6 1171.2 597.2C1171.7 596.9 1172.3 595.4 1172.7 591.6C1173.2 587.8 1173.6 580.0 1174.1 574.6C1174.5 569.3 1175.1 562.9 1175.6 559.6C1176.1 556.3 1176.6 555.2 1177.1 554.9C1177.6 554.5 1178.0 554.7 1178.4 557.7C1178.8 560.7 1179.2 566.5 1179.7 572.7C1180.2 579.0 1180.7 589.1 1181.2 595.4C1181.7 601.6 1182.3 607.6 1182.7 610.4C1183.2 613.2 1183.6 612.9 1184.1 612.3C1184.5 611.7 1184.9 610.7 1185.4 606.7C1185.8 602.6 1186.4 594.1 1186.9 587.8C1187.3 581.5 1187.7 574.2 1188.2 569.0C1188.7 563.8 1189.2 559.3 1189.7 556.7C1190.2 554.2 1190.7 553.7 1191.2 553.5C1191.7 553.4 1192.1 553.5 1192.5 555.8C1193.0 558.1 1193.4 561.8 1193.8 567.1C1194.3 572.4 1194.9 581.5 1195.4 587.8C1195.9 594.1 1196.4 600.7 1196.9 604.8C1197.3 608.9 1197.7 610.7 1198.2 612.3C1198.6 613.9 1199.1 612.9 1199.5 614.2C1199.9 615.4 1200.2 617.5 1200.6 619.8C1201.0 622.2 1201.5 626.4 1201.9 628.3C1202.4 630.2 1202.9 631.3 1203.3 631.1C1203.7 631.0 1204.0 630.2 1204.4 627.4C1204.8 624.6 1205.3 619.5 1205.7 614.2C1206.2 608.9 1206.6 601.6 1207.0 595.4C1207.5 589.1 1208.1 581.1 1208.5 576.5C1209.0 572.0 1209.5 569.6 1209.9 568.0C1210.3 566.5 1210.6 566.3 1211.0 567.1C1211.4 567.9 1211.9 571.2 1212.3 572.7C1212.7 574.3 1213.2 577.1 1213.6 576.5C1214.0 575.9 1214.3 572.1 1214.8 569.0C1215.2 565.8 1215.6 560.2 1216.1 557.7C1216.5 555.2 1216.9 554.9 1217.4 553.9C1217.9 553.0 1218.4 552.5 1218.9 552.0C1219.4 551.6 1219.9 551.4 1220.4 551.1C1220.9 550.8 1221.3 550.6 1221.7 550.1C1222.2 549.7 1222.6 547.9 1223.0 548.3C1223.5 548.6 1223.8 550.1 1224.2 552.0C1224.6 553.9 1225.1 558.0 1225.5 559.6C1225.9 561.1 1226.4 562.1 1226.8 561.4C1227.2 560.8 1227.5 558.0 1227.9 555.8C1228.4 553.6 1228.8 549.2 1229.3 548.3C1229.7 547.3 1230.2 548.6 1230.6 550.1C1231.0 551.7 1231.4 556.4 1231.5 557.7" stroke="#2b7bb0" stroke-width="1.1" fill="none" stroke-linejoin="round"/>
<path d="M814.7 591.6C814.9 591.7 815.6 593.8 816.0 592.5C816.5 591.3 817.0 587.2 817.5 584.1C818.0 580.9 818.6 575.7 819.0 573.7C819.5 571.6 819.9 571.3 820.4 571.8C820.8 572.3 821.3 573.5 821.7 576.5C822.1 579.5 822.4 587.0 822.8 589.7C823.2 592.4 823.7 593.5 824.1 592.5C824.6 591.6 825.0 587.7 825.4 584.1C825.9 580.4 826.5 573.4 827.0 570.9C827.4 568.3 827.9 568.3 828.3 568.6C828.7 568.9 829.1 571.0 829.4 572.7C829.7 574.5 830.0 578.7 830.3 579.3C830.7 580.0 831.2 578.0 831.7 576.5C832.1 575.0 832.6 571.7 833.0 570.5C833.4 569.3 833.7 568.8 834.1 569.4C834.5 569.9 834.9 572.0 835.2 573.7C835.6 575.4 836.0 578.9 836.4 579.3C836.8 579.8 837.3 578.0 837.7 576.5C838.1 575.0 838.4 571.7 838.8 570.5C839.2 569.3 839.7 568.8 840.1 569.4C840.5 569.9 840.9 572.0 841.3 573.7C841.6 575.4 842.0 578.6 842.4 579.3C842.8 580.1 843.1 579.8 843.5 578.4C843.9 577.0 844.4 572.4 844.9 570.9C845.3 569.4 845.7 569.4 846.2 569.4C846.6 569.4 847.2 569.0 847.7 570.9C848.1 572.7 848.5 576.2 849.0 580.3C849.5 584.4 850.0 591.0 850.5 595.4C851.0 599.7 851.4 603.7 851.8 606.7C852.3 609.6 852.9 612.3 853.3 613.2C853.8 614.2 854.2 613.7 854.6 612.3C855.1 610.9 855.4 606.3 855.8 604.8C856.2 603.2 856.7 602.3 857.1 602.9C857.5 603.5 857.8 606.8 858.2 608.5C858.6 610.3 859.0 612.6 859.4 613.2C859.7 613.9 860.1 613.7 860.5 612.3C860.9 610.9 861.4 606.3 861.8 604.8C862.2 603.2 862.7 602.6 863.1 602.9C863.5 603.2 863.8 605.1 864.3 606.7C864.7 608.2 865.1 612.0 865.6 612.3C866.0 612.6 866.4 611.4 866.9 608.5C867.4 605.7 867.8 599.7 868.4 595.4C869.0 591.0 869.7 586.1 870.3 582.2C870.9 578.2 871.6 574.1 872.2 571.8C872.7 569.5 873.2 568.6 873.7 568.6C874.1 568.6 874.6 570.2 875.0 571.8C875.4 573.4 875.9 577.9 876.3 578.4C876.7 578.9 877.0 576.0 877.4 574.6C877.8 573.2 878.3 570.4 878.8 569.9C879.2 569.5 879.6 570.1 880.1 571.8C880.5 573.5 881.1 576.4 881.6 580.3C882.1 584.2 882.7 590.3 883.1 595.4C883.5 600.4 883.7 607.1 884.0 610.4C884.3 613.7 884.6 614.8 885.0 615.1C885.4 615.4 885.9 614.0 886.3 612.3C886.7 610.6 887.1 606.3 887.6 604.8C888.1 603.2 888.6 602.6 889.1 602.9C889.6 603.2 890.0 605.1 890.4 606.7C890.8 608.2 891.2 611.7 891.6 612.3C892.0 612.9 892.4 612.6 892.9 610.4C893.3 608.2 893.7 603.8 894.2 599.1C894.7 594.4 895.2 587.3 895.7 582.2C896.2 577.0 896.6 569.9 897.0 568.0C897.4 566.2 897.8 569.8 898.2 570.9C898.6 572.0 899.0 572.7 899.5 574.6C899.9 576.5 900.3 578.1 900.8 582.2C901.3 586.2 901.8 594.1 902.3 599.1C902.8 604.1 903.2 609.5 903.6 612.3C904.0 615.1 904.3 616.4 904.8 616.1C905.2 615.8 905.6 612.3 906.1 610.4C906.5 608.5 907.0 606.0 907.4 604.8C907.8 603.5 908.1 602.6 908.5 602.9C908.9 603.2 909.4 605.1 909.8 606.7C910.3 608.2 910.7 611.4 911.2 612.3C911.6 613.2 912.2 613.9 912.7 612.3C913.1 610.7 913.5 607.0 914.0 602.9C914.5 598.8 915.0 592.4 915.5 587.8C916.0 583.3 916.5 578.2 917.0 575.6C917.5 572.9 918.2 571.3 918.7 571.8C919.2 572.3 919.7 574.5 920.2 578.4C920.7 582.3 921.1 590.0 921.5 595.4C921.9 600.7 922.2 607.0 922.7 610.4C923.1 613.9 923.5 616.1 924.0 616.1C924.4 616.1 924.9 612.0 925.3 610.4C925.7 608.9 926.2 607.8 926.6 606.7C927.0 605.6 927.4 604.1 927.9 603.8C928.4 603.5 928.9 603.7 929.4 604.8C929.9 605.9 930.3 609.0 930.7 610.4C931.1 611.8 931.5 613.6 931.9 613.2C932.3 612.9 932.7 611.5 933.2 608.5C933.6 605.6 934.0 600.1 934.5 595.4C935.0 590.6 935.5 584.1 936.0 580.3C936.5 576.5 936.9 573.7 937.3 572.7C937.8 571.8 938.4 572.7 938.8 574.6C939.3 576.5 939.7 581.1 940.2 584.1C940.6 587.0 940.9 591.6 941.3 592.5C941.7 593.5 942.2 592.4 942.6 589.7C943.0 587.0 943.5 579.9 943.9 576.5C944.3 573.1 944.6 570.5 945.1 569.4C945.5 568.3 946.0 569.0 946.4 569.9C946.8 570.8 946.9 573.2 947.3 574.6C947.7 576.0 948.2 578.7 948.6 578.4C949.0 578.1 949.4 574.3 949.8 572.7C950.2 571.2 950.6 569.5 951.1 569.0C951.5 568.5 952.0 568.7 952.4 569.9C952.8 571.2 953.1 572.9 953.5 576.5C953.9 580.1 954.4 586.9 954.9 591.6C955.3 596.3 955.9 601.3 956.4 604.8C956.8 608.2 957.2 610.8 957.7 612.3C958.1 613.8 958.6 614.4 959.0 613.8C959.4 613.2 959.7 611.6 960.1 608.5C960.5 605.5 961.0 600.1 961.4 595.4C961.9 590.6 962.5 584.5 963.0 580.3C963.4 576.0 963.8 572.1 964.3 569.9C964.7 567.7 965.2 567.1 965.6 567.1C966.0 567.1 966.4 568.4 966.7 569.9C967.1 571.5 967.3 575.1 967.7 576.5C968.0 577.9 968.3 578.9 968.6 578.4C968.9 577.9 969.2 575.1 969.5 573.7C969.9 572.3 970.4 570.1 970.9 569.9C971.3 569.8 971.8 570.7 972.2 572.7C972.6 574.8 973.0 579.2 973.3 582.2C973.7 585.1 973.9 588.9 974.3 590.6C974.6 592.4 974.9 593.3 975.2 592.5C975.5 591.7 975.8 588.8 976.1 585.9C976.5 583.1 976.7 577.9 977.1 575.6C977.5 573.2 978.0 571.6 978.4 571.8C978.8 572.0 979.3 574.2 979.7 576.5C980.1 578.9 980.3 583.3 980.7 585.9C981.0 588.6 981.3 591.9 981.6 592.5C981.9 593.2 982.2 592.1 982.5 589.7C982.9 587.3 983.3 581.2 983.7 578.4C984.1 575.6 984.6 573.1 985.0 572.7C985.4 572.4 985.9 574.3 986.3 576.5C986.7 578.7 986.9 583.3 987.3 585.9C987.6 588.6 987.9 591.9 988.2 592.5C988.5 593.2 988.8 592.1 989.1 589.7C989.5 587.3 989.7 581.9 990.1 578.4C990.4 574.9 990.8 570.7 991.2 569.0C991.6 567.3 992.2 567.1 992.5 568.0C992.9 569.0 993.1 571.0 993.5 574.6C993.8 578.2 994.3 585.0 994.8 589.7C995.3 594.4 995.8 599.9 996.3 602.9C996.8 605.9 997.2 607.6 997.6 607.6C998.0 607.6 998.3 606.2 998.7 602.9C999.2 599.6 999.6 592.8 1000.1 587.8C1000.5 582.8 1001.0 576.5 1001.4 572.7C1001.8 569.0 1002.0 565.7 1002.3 565.2C1002.7 564.7 1003.0 569.3 1003.5 569.9C1003.9 570.5 1004.3 568.2 1004.8 569.0C1005.2 569.8 1005.7 571.5 1006.1 574.6C1006.5 577.8 1006.8 583.4 1007.2 587.8C1007.6 592.2 1008.1 597.6 1008.5 601.0C1009.0 604.5 1009.5 607.0 1009.9 608.5C1010.3 610.1 1010.6 611.4 1011.0 610.4C1011.4 609.5 1011.9 607.0 1012.3 602.9C1012.7 598.8 1013.2 591.1 1013.6 585.9C1014.0 580.8 1014.4 575.1 1014.8 571.8C1015.1 568.5 1015.3 566.3 1015.7 566.2C1016.1 566.0 1016.6 570.2 1017.0 570.9C1017.5 571.5 1017.9 569.0 1018.3 569.9C1018.7 570.9 1019.1 572.9 1019.5 576.5C1019.9 580.1 1020.3 587.2 1020.8 591.6C1021.3 596.0 1021.8 600.1 1022.3 602.9C1022.8 605.7 1023.2 607.8 1023.6 608.5C1024.1 609.3 1024.5 609.8 1024.9 607.6C1025.3 605.4 1025.7 600.5 1026.1 595.4C1026.5 590.2 1027.0 581.4 1027.4 576.5C1027.8 571.6 1027.9 566.8 1028.3 566.2C1028.7 565.5 1029.2 571.3 1029.6 572.7C1030.0 574.2 1030.4 572.7 1030.8 574.6C1031.2 576.5 1031.6 580.0 1032.1 584.1C1032.5 588.1 1032.9 594.7 1033.4 599.1C1033.9 603.5 1034.5 608.4 1034.9 610.4C1035.3 612.5 1035.3 611.7 1035.7 611.4C1036.0 611.1 1036.6 610.9 1037.0 608.5C1037.4 606.2 1037.7 600.4 1038.1 597.2C1038.5 594.1 1039.0 591.1 1039.4 589.7C1039.8 588.3 1040.0 587.8 1040.4 588.8C1040.7 589.7 1040.9 592.1 1041.3 595.4C1041.7 598.6 1042.2 605.6 1042.6 608.5C1043.0 611.5 1043.3 612.9 1043.8 613.2C1044.2 613.6 1044.6 613.4 1045.1 610.4C1045.5 607.4 1045.9 600.7 1046.4 595.4C1046.9 590.0 1047.4 582.6 1047.9 578.4C1048.4 574.2 1048.7 571.5 1049.2 569.9C1049.7 568.4 1050.3 567.9 1050.7 569.0C1051.2 570.1 1051.6 572.4 1052.0 576.5C1052.5 580.6 1053.0 588.1 1053.5 593.5C1054.1 598.8 1054.5 605.1 1055.1 608.5C1055.6 612.0 1056.2 613.6 1056.8 614.2C1057.3 614.8 1057.8 614.8 1058.3 612.3C1058.7 609.8 1059.1 604.1 1059.6 599.1C1060.0 594.1 1060.6 586.9 1061.1 582.2C1061.6 577.5 1062.1 573.2 1062.6 570.9C1063.1 568.5 1063.5 567.4 1063.9 568.0C1064.3 568.7 1064.8 570.7 1065.2 574.6C1065.7 578.6 1066.2 586.6 1066.7 591.6C1067.2 596.6 1067.8 601.8 1068.2 604.8C1068.7 607.8 1069.1 609.3 1069.6 609.5C1070.0 609.6 1070.5 608.7 1070.9 605.7C1071.3 602.7 1071.6 596.8 1072.0 591.6C1072.4 586.4 1073.0 578.9 1073.3 574.6C1073.7 570.4 1074.0 566.2 1074.3 566.2C1074.6 566.2 1074.9 573.8 1075.2 574.6C1075.5 575.4 1075.8 570.5 1076.2 570.9C1076.5 571.2 1076.7 573.1 1077.1 576.5C1077.5 580.0 1078.0 587.2 1078.4 591.6C1078.8 596.0 1079.1 600.4 1079.5 602.9C1080.0 605.4 1080.4 607.3 1080.9 606.7C1081.3 606.0 1081.8 602.6 1082.2 599.1C1082.6 595.7 1082.9 589.7 1083.3 585.9C1083.7 582.2 1084.2 578.6 1084.6 576.5C1085.1 574.5 1085.5 573.7 1085.9 573.7C1086.4 573.7 1086.7 574.5 1087.1 576.5C1087.5 578.6 1088.0 583.3 1088.4 585.9C1088.8 588.6 1089.3 592.2 1089.7 592.5C1090.1 592.8 1090.4 590.8 1090.8 587.8C1091.3 584.8 1091.7 577.8 1092.2 574.6C1092.6 571.5 1093.1 569.6 1093.5 569.0C1093.9 568.4 1094.3 569.3 1094.6 570.9C1095.0 572.4 1095.2 577.5 1095.6 578.4C1095.9 579.3 1096.5 577.8 1096.9 576.5C1097.3 575.3 1097.4 571.5 1097.8 570.9C1098.2 570.2 1098.7 570.9 1099.1 572.7C1099.5 574.6 1099.9 579.2 1100.3 582.2C1100.7 585.1 1101.1 589.7 1101.6 590.6C1102.0 591.6 1102.5 590.2 1102.9 587.8C1103.3 585.5 1103.6 579.2 1104.0 576.5C1104.4 573.8 1104.9 572.1 1105.4 571.8C1105.8 571.5 1106.3 572.0 1106.7 574.6C1107.1 577.3 1107.4 582.8 1107.8 587.8C1108.2 592.8 1108.7 600.4 1109.1 604.8C1109.6 609.2 1110.0 612.9 1110.4 614.2C1110.8 615.4 1111.2 612.9 1111.6 612.3C1112.0 611.7 1112.4 612.3 1112.9 610.4C1113.3 608.5 1113.8 605.1 1114.2 601.0C1114.6 596.9 1114.9 590.0 1115.3 585.9C1115.7 581.9 1116.2 578.6 1116.7 576.5C1117.1 574.5 1117.6 573.7 1118.0 573.7C1118.4 573.7 1118.7 574.5 1119.1 576.5C1119.5 578.6 1119.9 583.1 1120.4 585.9C1120.9 588.8 1121.8 593.2 1122.3 593.5C1122.8 593.8 1123.0 591.0 1123.4 587.8C1123.8 584.7 1124.3 577.7 1124.7 574.6C1125.1 571.6 1125.6 569.7 1126.0 569.4C1126.4 569.0 1126.8 571.1 1127.2 572.7C1127.5 574.4 1127.7 578.7 1128.1 579.3C1128.5 580.0 1129.0 578.0 1129.4 576.5C1129.9 575.0 1130.3 571.3 1130.7 570.5C1131.1 569.7 1131.5 570.5 1131.9 571.8C1132.3 573.1 1132.7 577.0 1133.2 578.4C1133.6 579.8 1134.1 580.9 1134.5 580.3C1134.9 579.7 1135.2 576.4 1135.6 574.6C1136.0 572.9 1136.5 570.5 1137.0 569.9C1137.4 569.3 1137.9 569.8 1138.3 570.9C1138.7 572.0 1139.0 573.4 1139.4 576.5C1139.8 579.7 1140.3 585.3 1140.7 589.7C1141.2 594.1 1141.7 599.3 1142.2 602.9C1142.8 606.5 1143.4 609.5 1143.9 611.4C1144.5 613.2 1145.0 614.0 1145.4 614.2C1145.9 614.3 1146.3 614.2 1146.8 612.3C1147.2 610.4 1147.5 607.3 1147.9 602.9C1148.3 598.5 1148.7 590.6 1149.2 585.9C1149.7 581.2 1150.2 577.0 1150.7 574.6C1151.2 572.3 1151.6 571.5 1152.0 571.8C1152.5 572.1 1152.9 573.8 1153.3 576.5C1153.8 579.2 1154.1 585.0 1154.5 587.8C1154.9 590.6 1155.4 593.5 1155.8 593.5C1156.2 593.5 1156.7 590.6 1157.1 587.8C1157.5 585.0 1157.8 579.2 1158.2 576.5C1158.6 573.8 1159.1 571.8 1159.6 571.8C1160.0 571.8 1160.5 573.8 1160.9 576.5C1161.3 579.2 1161.6 585.1 1162.0 587.8C1162.4 590.5 1162.9 592.5 1163.3 592.5C1163.8 592.5 1164.2 590.5 1164.6 587.8C1165.1 585.1 1165.4 579.2 1165.8 576.5C1166.2 573.8 1166.7 571.5 1167.1 571.8C1167.5 572.1 1167.7 575.1 1168.0 578.4C1168.4 581.7 1168.7 589.1 1169.0 591.6C1169.3 594.1 1169.6 595.0 1169.9 593.5C1170.2 591.9 1170.5 586.1 1170.9 582.2C1171.2 578.2 1171.4 572.1 1171.8 569.9C1172.2 567.7 1172.7 567.9 1173.1 569.0C1173.5 570.1 1173.8 572.7 1174.3 576.5C1174.7 580.3 1175.1 587.2 1175.6 591.6C1176.0 596.0 1176.6 599.9 1177.1 602.9C1177.6 605.9 1178.0 609.2 1178.4 609.5C1178.8 609.8 1179.3 608.1 1179.7 604.8C1180.1 601.5 1180.4 595.0 1180.8 589.7C1181.3 584.4 1181.8 576.8 1182.2 572.7C1182.5 568.7 1182.8 564.9 1183.1 565.2C1183.4 565.5 1183.7 573.5 1184.1 574.6C1184.4 575.7 1184.7 570.5 1185.0 571.8C1185.3 573.1 1185.6 577.6 1185.9 582.2C1186.3 586.7 1186.8 594.1 1187.3 599.1C1187.7 604.1 1188.0 609.5 1188.4 612.3C1188.7 615.1 1189.0 616.4 1189.3 616.1C1189.6 615.8 1189.9 611.7 1190.3 610.4C1190.6 609.2 1191.1 610.4 1191.6 608.5C1192.0 606.7 1192.5 603.5 1192.9 599.1C1193.3 594.7 1193.6 587.2 1194.0 582.2C1194.4 577.1 1195.0 571.8 1195.4 569.0C1195.7 566.2 1196.0 564.6 1196.3 565.2C1196.6 565.8 1196.9 571.8 1197.2 572.7C1197.6 573.7 1197.8 569.6 1198.2 570.9C1198.6 572.1 1199.0 576.2 1199.5 580.3C1200.0 584.4 1200.5 591.0 1201.0 595.4C1201.5 599.7 1201.9 603.8 1202.3 606.7C1202.8 609.5 1203.4 611.1 1203.8 612.3C1204.3 613.6 1204.7 614.5 1205.1 614.2C1205.6 613.9 1205.9 612.3 1206.3 610.4C1206.6 608.5 1206.9 604.1 1207.2 602.9C1207.5 601.6 1207.8 601.6 1208.2 602.9C1208.5 604.1 1208.7 608.9 1209.1 610.4C1209.5 612.0 1210.0 613.2 1210.4 612.3C1210.9 611.4 1211.3 608.5 1211.7 604.8C1212.2 601.0 1212.5 594.7 1212.9 589.7C1213.3 584.7 1213.8 578.2 1214.2 574.6C1214.6 571.0 1215.1 568.0 1215.5 568.0C1215.9 568.0 1216.2 573.7 1216.6 574.6C1217.0 575.6 1217.5 572.1 1218.0 573.7C1218.4 575.3 1218.9 580.9 1219.3 584.1C1219.7 587.2 1220.0 591.3 1220.4 592.5C1220.8 593.8 1221.3 593.9 1221.7 591.6C1222.2 589.2 1222.6 582.0 1223.0 578.4C1223.5 574.8 1223.8 571.2 1224.2 569.9C1224.6 568.7 1225.1 569.5 1225.5 570.9C1225.9 572.3 1226.4 576.8 1226.8 578.4C1227.2 580.0 1227.5 580.9 1227.9 580.3C1228.4 579.7 1228.8 576.4 1229.3 574.6C1229.7 572.9 1230.2 569.9 1230.6 569.9C1231.0 569.9 1231.4 573.8 1231.5 574.6" stroke="#d0673a" stroke-width="1.1" fill="none" stroke-linejoin="round"/></g>
<path d="M815.1 647v-4M815.1 524v4M867.5 647v-4M867.5 524v4M919.9 647v-4M919.9 524v4M972.3 647v-4M972.3 524v4M1024.7 647v-4M1024.7 524v4M1077.1 647v-4M1077.1 524v4M1129.5 647v-4M1129.5 524v4M1181.9 647v-4M1181.9 524v4M815 634.4h4M1231.3 634.4h-4M815 612.8h4M1231.3 612.8h-4M815 591.2h4M1231.3 591.2h-4M815 569.6h4M1231.3 569.6h-4M815 548.0h4M1231.3 548.0h-4M815 526.4h4M1231.3 526.4h-4" stroke="#262626" stroke-width="1" fill="none"/>
<rect x="815" y="524" width="416.29999999999995" height="123" fill="none" stroke="#262626" stroke-width="1.2"/>
<text x="812.5" y="637.4" font-size="8.6" fill="#4c4c4c" text-anchor="end">-0.2</text><text x="812.5" y="615.8" font-size="8.6" fill="#4c4c4c" text-anchor="end">-0.1</text><text x="812.5" y="594.2" font-size="8.6" fill="#4c4c4c" text-anchor="end">0</text><text x="812.5" y="572.6" font-size="8.6" fill="#4c4c4c" text-anchor="end">0.1</text><text x="812.5" y="551.0" font-size="8.6" fill="#4c4c4c" text-anchor="end">0.2</text><text x="812.5" y="529.4" font-size="8.6" fill="#4c4c4c" text-anchor="end">0.3</text><text x="815.1" y="660" font-size="8.6" fill="#4c4c4c" text-anchor="middle">0</text><text x="867.5" y="660" font-size="8.6" fill="#4c4c4c" text-anchor="middle">0.5</text><text x="919.9" y="660" font-size="8.6" fill="#4c4c4c" text-anchor="middle">1</text><text x="972.3" y="660" font-size="8.6" fill="#4c4c4c" text-anchor="middle">1.5</text><text x="1024.7" y="660" font-size="8.6" fill="#4c4c4c" text-anchor="middle">2</text><text x="1077.1" y="660" font-size="8.6" fill="#4c4c4c" text-anchor="middle">2.5</text><text x="1129.5" y="660" font-size="8.6" fill="#4c4c4c" text-anchor="middle">3</text><text x="1181.9" y="660" font-size="8.6" fill="#4c4c4c" text-anchor="middle">3.5</text>
<text x="1023.5" y="519.4" font-size="9.3" font-weight="bold" fill="#111" text-anchor="middle">PRBS Waveform</text>
<text x="1023.5" y="672" font-size="9" fill="#4c4c4c" text-anchor="middle">[ s ]</text>
<text x="1211" y="670.5" font-size="8.2" fill="#4c4c4c">×10<tspan dy="-3" font-size="5.6">-9</tspan></text>
<text transform="translate(793.2 585.5) rotate(-90)" font-size="9" fill="#4c4c4c" text-anchor="middle">[ V ]</text>
<rect x="1147.3" y="529.6" width="76.2" height="21.7" rx="0.8" fill="#fff" stroke="#3a3a3a" stroke-width="1.1"/>
<path d="M1150.0 536.0h26" stroke="#2b7bb0" stroke-width="1.1"/><path d="M1150.0 545.1h26" stroke="#d0673a" stroke-width="1.1"/>
<text x="1179.1" y="537.7" font-size="7.5" fill="#4c4c4c">Unequalized</text><text x="1179.1" y="547.3000000000001" font-size="7.5" fill="#4c4c4c">Equalized</text>
</svg>
<div class="abs" style="left:0;top:674px;width:1282px;height:16px;background:#e4e4e4;border-top:1px solid #bdbdbd"></div>
<div class="abs" style="left:0;top:0;width:1282px;height:1px;background:#2a2a2a"></div>
<div class="abs" style="left:0;top:0;width:1px;height:690px;background:#2a2a2a"></div>
<div class="abs" style="left:1281px;top:0;width:1px;height:690px;background:#444"></div>
<div class="abs" style="left:0;top:688px;width:1282px;height:2px;background:#2a2a2a"></div>
</div></body></html>
